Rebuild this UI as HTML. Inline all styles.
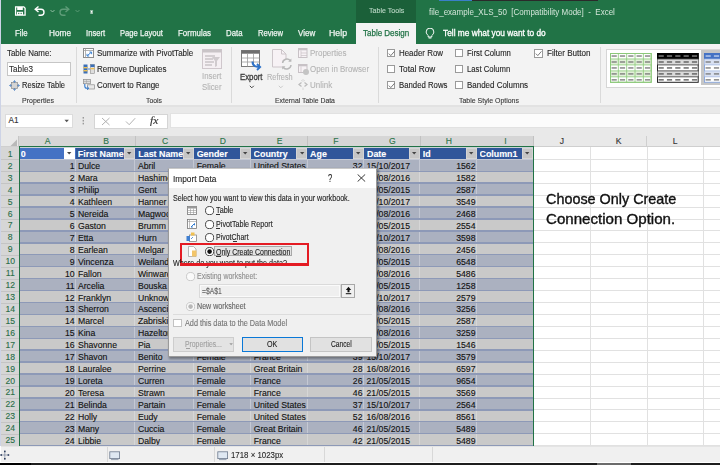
<!DOCTYPE html>
<html><head><meta charset="utf-8"><style>
html,body{margin:0;padding:0;}
body{width:720px;height:465px;overflow:hidden;position:relative;background:#fff;font-family:"Liberation Sans",sans-serif;}
.r{position:absolute;}
.t{position:absolute;white-space:pre;transform-origin:0 0;-webkit-text-stroke:0.12px currentColor;}
</style></head><body>
<div class="r" style="left:0.00px;top:0.00px;width:720.00px;height:44.30px;background:#217346;"></div><div class="r" style="left:0.00px;top:0.00px;width:1.00px;height:446.00px;background:#cdd3e6;"></div><div class="r" style="left:439.00px;top:0.00px;width:33.00px;height:1.20px;background:#3a7fc8;"></div><div class="r" style="left:472.00px;top:0.00px;width:126.00px;height:1.20px;background:#2a2a2a;"></div><div class="r" style="left:356.00px;top:0.00px;width:60.00px;height:23.30px;background:#1b6039;"></div><span class="t" style="left:368.70px;top:7.11px;font-size:7.2px;line-height:7.2px;color:#b9d6c4;transform:scaleX(0.9835);">Table Tools</span><span class="t" style="left:429.00px;top:8.32px;font-size:8.6px;line-height:8.6px;color:#d4e6da;transform:scaleX(0.9309);-webkit-text-stroke:0;">file_example_XLS_50  [Compatibility Mode]  -  Excel</span><svg class="r" style="left:14px;top:6px;" width="12" height="10" viewBox="0 0 12 10"><path d="M1.6 0.9h8.2l1.3 1.3v6.9h-9.5z" fill="none" stroke="#fff" stroke-width="1.3"/><rect x="3.2" y="1" width="5.6" height="3" fill="#fff"/><rect x="3" y="5.8" width="6" height="3.3" fill="#fff"/><rect x="4.2" y="6.8" width="1.1" height="1.3" fill="#217346"/><rect x="6.6" y="6.8" width="1.1" height="1.3" fill="#217346"/></svg><svg class="r" style="left:33px;top:6px;" width="13" height="10" viewBox="0 0 13 10"><path d="M3 3.2h5a3 3 0 0 1 0 6h-2.5" fill="none" stroke="#fff" stroke-width="1.4"/><path d="M5.5 0.5L2.2 3.2L5.5 6" fill="none" stroke="#fff" stroke-width="1.4"/></svg><svg class="r" style="left:49.5px;top:9px;" width="5" height="4" viewBox="0 0 5 4"><path d="M0.5 1l2 2l2-2" fill="none" stroke="#9cc5ad" stroke-width="0.9"/></svg><svg class="r" style="left:59px;top:6px;" width="12" height="10" viewBox="0 0 12 10"><path d="M9 3.2h-5a3 3 0 0 0 0 6h2.5" fill="none" stroke="#5e9c78" stroke-width="1.4"/><path d="M6.5 0.5L9.8 3.2L6.5 6" fill="none" stroke="#5e9c78" stroke-width="1.4"/></svg><svg class="r" style="left:75.2px;top:9px;" width="5" height="4" viewBox="0 0 5 4"><path d="M0.5 1l2 2l2-2" fill="none" stroke="#5e9c78" stroke-width="0.9"/></svg><svg class="r" style="left:88.5px;top:8.5px;" width="6" height="6" viewBox="0 0 6 6"><path d="M0.9 1.6h3.4l-1.7 2.2z" fill="#fff"/><rect x="1.3" y="3.4" width="2.6" height="1.2" fill="#fff"/></svg><span class="t" style="left:14.50px;top:29.00px;font-size:8.5px;line-height:8.5px;color:#eef4f0;transform:scaleX(0.9199);-webkit-text-stroke:0.25px #eef4f0;">File</span><span class="t" style="left:49.00px;top:29.00px;font-size:8.5px;line-height:8.5px;color:#eef4f0;transform:scaleX(0.9703);-webkit-text-stroke:0.25px #eef4f0;">Home</span><span class="t" style="left:85.50px;top:29.00px;font-size:8.5px;line-height:8.5px;color:#eef4f0;transform:scaleX(0.9032);-webkit-text-stroke:0.25px #eef4f0;">Insert</span><span class="t" style="left:120.30px;top:29.00px;font-size:8.5px;line-height:8.5px;color:#eef4f0;transform:scaleX(0.9008);-webkit-text-stroke:0.25px #eef4f0;">Page Layout</span><span class="t" style="left:177.80px;top:29.00px;font-size:8.5px;line-height:8.5px;color:#eef4f0;transform:scaleX(0.9315);-webkit-text-stroke:0.25px #eef4f0;">Formulas</span><span class="t" style="left:225.50px;top:29.00px;font-size:8.5px;line-height:8.5px;color:#eef4f0;transform:scaleX(0.9190);-webkit-text-stroke:0.25px #eef4f0;">Data</span><span class="t" style="left:257.50px;top:29.00px;font-size:8.5px;line-height:8.5px;color:#eef4f0;transform:scaleX(0.8970);-webkit-text-stroke:0.25px #eef4f0;">Review</span><span class="t" style="left:297.50px;top:29.00px;font-size:8.5px;line-height:8.5px;color:#eef4f0;transform:scaleX(0.9414);-webkit-text-stroke:0.25px #eef4f0;">View</span><span class="t" style="left:328.70px;top:29.00px;font-size:8.5px;line-height:8.5px;color:#eef4f0;transform:scaleX(1.0296);-webkit-text-stroke:0.25px #eef4f0;">Help</span><div class="r" style="left:356.00px;top:23.30px;width:60.00px;height:21.00px;background:#f3f3f3;"></div><span class="t" style="left:362.50px;top:29.40px;font-size:8.5px;line-height:8.5px;color:#217346;transform:scaleX(0.9401);-webkit-text-stroke:0.25px #217346;">Table Design</span><svg class="r" style="left:425px;top:28px;" width="11" height="11" viewBox="0 0 11 11"><path d="M3.2 7.5c-1.2-1-2-2.2-2-3.6a3.8 3.8 0 0 1 7.6 0c0 1.4-.8 2.6-2 3.6v1.5h-3.6z" fill="none" stroke="#fff" stroke-width="1"/><path d="M3.6 10h2.8" stroke="#fff" stroke-width="1"/></svg><span class="t" style="left:443.30px;top:29.00px;font-size:8.5px;line-height:8.5px;color:#ffffff;transform:scaleX(0.9791);-webkit-text-stroke:0.3px #fff;">Tell me what you want to do</span><div class="r" style="left:1.00px;top:44.30px;width:719.00px;height:60.70px;background:#f3f3f3;"></div><div class="r" style="left:1.00px;top:104.80px;width:719.00px;height:2.40px;background:#e2e2e2;"></div><div class="r" style="left:1.00px;top:107.00px;width:719.00px;height:28.50px;background:#e9e9e9;"></div><span class="t" style="left:7.00px;top:49.20px;font-size:8.5px;line-height:8.5px;color:#262626;transform:scaleX(0.9326);">Table Name:</span><div class="r" style="left:6.60px;top:61.50px;width:64.00px;height:14.50px;background:#fff;border:1px solid #c6c6c6;box-sizing:border-box;"></div><span class="t" style="left:9.00px;top:64.80px;font-size:8.5px;line-height:8.5px;color:#303030;transform:scaleX(0.9581);">Table3</span><svg class="r" style="left:9px;top:80px;" width="11" height="11" viewBox="0 0 11 11"><rect x="2.5" y="2.5" width="6" height="6" fill="#d4d4d4" stroke="#8a8a8a" stroke-width="0.7"/><path d="M5.5 0.8v2M5.5 8.2v2M0.8 5.5h2M8.2 5.5h2" stroke="#4a7fc0" stroke-width="0.8"/><path d="M4.2 1.8l1.3-1.2l1.3 1.2M4.2 9.2l1.3 1.2l1.3-1.2M1.8 4.2l-1.2 1.3l1.2 1.3M9.2 4.2l1.2 1.3l-1.2 1.3" fill="none" stroke="#4a7fc0" stroke-width="0.8"/></svg><span class="t" style="left:22.00px;top:81.30px;font-size:8.5px;line-height:8.5px;color:#262626;transform:scaleX(0.8864);">Resize Table</span><span class="t" style="left:22.00px;top:96.87px;font-size:7.6px;line-height:7.6px;color:#383838;transform:scaleX(0.9238);">Properties</span><div class="r" style="left:76.00px;top:47.00px;width:1.00px;height:56.00px;background:#dadada;"></div><svg class="r" style="left:83px;top:48px;" width="11" height="10" viewBox="0 0 11 10"><rect x="0.5" y="0.5" width="10" height="9" fill="#fff" stroke="#8c8c8c"/><path d="M0.5 2.5h10M2.5 0.5v9" stroke="#a0a0a0" stroke-width="0.8"/><path d="M4.5 7.5l3.5-3" fill="none" stroke="#2f7ad1" stroke-width="1"/><path d="M4 5.8v2.2h2.2M8.6 6.2v-2.2h-2.2" fill="none" stroke="#2f7ad1" stroke-width="0.9"/></svg><span class="t" style="left:96.50px;top:49.40px;font-size:8.5px;line-height:8.5px;color:#262626;transform:scaleX(0.9437);">Summarize with PivotTable</span><svg class="r" style="left:83px;top:63.5px;" width="12" height="10" viewBox="0 0 12 10"><rect x="0.5" y="0.5" width="4" height="9" fill="#3b6fb6"/><rect x="0.5" y="3" width="4" height="1.4" fill="#f0c050"/><rect x="0.5" y="6" width="4" height="1.4" fill="#f0c050"/><path d="M5 5h2" stroke="#5585c5" stroke-width="1"/><rect x="7.5" y="0.5" width="4" height="9" fill="#dedede" stroke="#8c8c8c" stroke-width="0.6"/><rect x="7.5" y="0.5" width="4" height="2.5" fill="#3b6fb6"/><rect x="7.5" y="4" width="4" height="1.3" fill="#f0c050"/></svg><span class="t" style="left:96.50px;top:65.40px;font-size:8.5px;line-height:8.5px;color:#262626;transform:scaleX(0.9430);">Remove Duplicates</span><svg class="r" style="left:83px;top:79px;" width="12" height="11" viewBox="0 0 12 11"><rect x="0.5" y="0.5" width="7" height="4.2" fill="#dcdcdc" stroke="#8c8c8c" stroke-width="0.7"/><path d="M0.5 2.5h7M3.5 0.5v4" stroke="#9a9a9a" stroke-width="0.5"/><rect x="4.5" y="5.8" width="7" height="4.2" fill="#e8e8e8" stroke="#8c8c8c" stroke-width="0.7"/><path d="M1.8 5v2.2c0 1.3 0.8 2 2.2 2h1.2" fill="none" stroke="#2f7ad1" stroke-width="1.1"/><path d="M4.2 7.6l1.6 1.6l-1.6 1.6" fill="none" stroke="#2f7ad1" stroke-width="1"/></svg><span class="t" style="left:96.50px;top:80.60px;font-size:8.5px;line-height:8.5px;color:#262626;transform:scaleX(0.9381);">Convert to Range</span><svg class="r" style="left:202px;top:49px;" width="20" height="20" viewBox="0 0 20 20"><rect x="0.5" y="0.5" width="19" height="19" fill="#f5f0f3" stroke="#cfc7cc"/><rect x="0.5" y="0.5" width="19" height="3" fill="#c9c4c7"/><path d="M3 7h10M3 10h8M3 13h9M3 16h7" stroke="#c9c4c7" stroke-width="1.3"/><path d="M10 8h8l-3 4v5l-2 1v-6z" fill="#d0cbce"/></svg><span class="t" style="left:202.00px;top:72.10px;font-size:8.5px;line-height:8.5px;color:#b4b4b4;transform:scaleX(0.9173);">Insert</span><span class="t" style="left:202.00px;top:82.80px;font-size:8.5px;line-height:8.5px;color:#b4b4b4;transform:scaleX(0.9174);">Slicer</span><span class="t" style="left:145.70px;top:96.87px;font-size:7.6px;line-height:7.6px;color:#383838;transform:scaleX(0.9018);">Tools</span><div class="r" style="left:231.00px;top:47.00px;width:1.00px;height:56.00px;background:#dadada;"></div><svg class="r" style="left:241px;top:50px;" width="22" height="21" viewBox="0 0 22 21"><rect x="0.5" y="0.5" width="18" height="16" fill="#fff" stroke="#7a7a7a"/><rect x="0.5" y="0.5" width="18" height="3.2" fill="#6e6e6e"/><path d="M0.5 8h18M0.5 12h18M6.5 4v12.5M12.5 4v12.5" stroke="#9a9a9a" stroke-width="0.8"/><path d="M11.5 11.5c0 3.5 2.5 5.5 6.5 5.5" fill="none" stroke="#2f73c9" stroke-width="2"/><path d="M16 14l3.2 3l-3.2 3" fill="none" stroke="#2f73c9" stroke-width="1.8"/></svg><span class="t" style="left:239.50px;top:72.64px;font-size:8.7px;line-height:8.7px;color:#383838;transform:scaleX(0.8948);-webkit-text-stroke:0.3px #383838;">Export</span><svg class="r" style="left:249px;top:85px;" width="6" height="4" viewBox="0 0 6 4"><path d="M0.8 0.8l2 2l2-2" fill="none" stroke="#444" stroke-width="1"/></svg><svg class="r" style="left:272px;top:49px;" width="20" height="21" viewBox="0 0 20 21"><path d="M0.5 0.5h9l4.5 4.5v13h-13.5z" fill="#f7f2f5" stroke="#cdc6ca"/><path d="M9.5 0.5v4.5h4.5" fill="none" stroke="#cdc6ca"/><circle cx="14.8" cy="15" r="5" fill="#f3f3f3"/><path d="M10.6 14a4.3 4.3 0 0 1 7.6-2.4" fill="none" stroke="#b8b8b8" stroke-width="1.5"/><path d="M19 16a4.3 4.3 0 0 1-7.6 2.4" fill="none" stroke="#b8b8b8" stroke-width="1.5"/><path d="M19.4 9.6v3.2h-3.2z" fill="#b8b8b8"/><path d="M10.2 20.4v-3.2h3.2z" fill="#b8b8b8"/></svg><span class="t" style="left:266.70px;top:72.80px;font-size:8.5px;line-height:8.5px;color:#b4b4b4;transform:scaleX(0.8635);">Refresh</span><svg class="r" style="left:277.5px;top:85px;" width="6" height="4" viewBox="0 0 6 4"><path d="M0.8 0.8l2 2l2-2" fill="none" stroke="#c4c4c4" stroke-width="0.9"/></svg><svg class="r" style="left:297.5px;top:48px;" width="10" height="10" viewBox="0 0 10 10"><rect x="0.5" y="0.5" width="8.5" height="9" fill="#f7f2f5" stroke="#c8c2c6"/><rect x="0.5" y="0.5" width="8.5" height="1.8" fill="#c8c2c6"/><path d="M3 2.5v7M3 5h6M3 7.5h6" stroke="#c8c2c6" stroke-width="0.7"/></svg><span class="t" style="left:309.80px;top:49.20px;font-size:8.5px;line-height:8.5px;color:#b4b4b4;transform:scaleX(0.9396);">Properties</span><svg class="r" style="left:297.5px;top:64px;" width="12" height="11" viewBox="0 0 12 11"><rect x="0.5" y="0.5" width="8.5" height="8" fill="#f7f2f5" stroke="#c8c2c6"/><rect x="0.5" y="0.5" width="8.5" height="1.8" fill="#c8c2c6"/><path d="M3 2.5v6" stroke="#c8c2c6" stroke-width="0.7"/><circle cx="8" cy="8" r="3" fill="#c4c4c4"/></svg><span class="t" style="left:309.80px;top:65.00px;font-size:8.5px;line-height:8.5px;color:#b4b4b4;transform:scaleX(0.9335);">Open in Browser</span><svg class="r" style="left:297.5px;top:79px;" width="10" height="11" viewBox="0 0 10 11"><path d="M3.5 3.5l-2.5 2l2.5 2M6.5 3.5l2.5 2l-2.5 2" fill="none" stroke="#bcbcbc" stroke-width="1.3"/><path d="M5 0v2.5M5 8.5v2.5M3.3 1.2l0.8 1.2M6.7 1.2l-0.8 1.2" stroke="#c8c8c8" stroke-width="0.6"/></svg><span class="t" style="left:309.80px;top:80.60px;font-size:8.5px;line-height:8.5px;color:#b4b4b4;transform:scaleX(0.9399);">Unlink</span><span class="t" style="left:274.90px;top:96.87px;font-size:7.6px;line-height:7.6px;color:#383838;transform:scaleX(0.9065);">External Table Data</span><div class="r" style="left:378.00px;top:47.00px;width:1.00px;height:56.00px;background:#dadada;"></div><div class="r" style="left:387.20px;top:49.30px;width:8.20px;height:8.20px;background:#fff;border:1px solid #9a9a9a;box-sizing:border-box;"></div><svg class="r" style="left:387.2px;top:49.3px;" width="9" height="9" viewBox="0 0 9 9"><path d="M1.8 4.6l2 2l3.6-4.2" fill="none" stroke="#555" stroke-width="0.8"/></svg><span class="t" style="left:398.80px;top:49.30px;font-size:8.5px;line-height:8.5px;color:#262626;transform:scaleX(0.9313);">Header Row</span><div class="r" style="left:387.20px;top:65.00px;width:8.20px;height:8.20px;background:#fff;border:1px solid #9a9a9a;box-sizing:border-box;"></div><span class="t" style="left:398.80px;top:65.10px;font-size:8.5px;line-height:8.5px;color:#262626;transform:scaleX(0.9700);">Total Row</span><div class="r" style="left:387.20px;top:80.70px;width:8.20px;height:8.20px;background:#fff;border:1px solid #9a9a9a;box-sizing:border-box;"></div><svg class="r" style="left:387.2px;top:80.7px;" width="9" height="9" viewBox="0 0 9 9"><path d="M1.8 4.6l2 2l3.6-4.2" fill="none" stroke="#555" stroke-width="0.8"/></svg><span class="t" style="left:398.80px;top:80.70px;font-size:8.5px;line-height:8.5px;color:#262626;transform:scaleX(0.9145);">Banded Rows</span><div class="r" style="left:455.00px;top:49.30px;width:8.20px;height:8.20px;background:#fff;border:1px solid #9a9a9a;box-sizing:border-box;"></div><span class="t" style="left:466.60px;top:49.30px;font-size:8.5px;line-height:8.5px;color:#262626;transform:scaleX(0.9113);">First Column</span><div class="r" style="left:455.00px;top:65.00px;width:8.20px;height:8.20px;background:#fff;border:1px solid #9a9a9a;box-sizing:border-box;"></div><span class="t" style="left:466.60px;top:65.10px;font-size:8.5px;line-height:8.5px;color:#262626;transform:scaleX(0.9074);">Last Column</span><div class="r" style="left:455.00px;top:80.70px;width:8.20px;height:8.20px;background:#fff;border:1px solid #9a9a9a;box-sizing:border-box;"></div><span class="t" style="left:466.60px;top:80.70px;font-size:8.5px;line-height:8.5px;color:#262626;transform:scaleX(0.9370);">Banded Columns</span><div class="r" style="left:534.40px;top:49.40px;width:8.20px;height:8.20px;background:#fff;border:1px solid #9a9a9a;box-sizing:border-box;"></div><svg class="r" style="left:534.4px;top:49.4px;" width="9" height="9" viewBox="0 0 9 9"><path d="M1.8 4.6l2 2l3.6-4.2" fill="none" stroke="#555" stroke-width="0.8"/></svg><span class="t" style="left:546.70px;top:49.30px;font-size:8.5px;line-height:8.5px;color:#262626;transform:scaleX(0.9514);">Filter Button</span><span class="t" style="left:459.40px;top:96.87px;font-size:7.6px;line-height:7.6px;color:#383838;transform:scaleX(0.9163);">Table Style Options</span><div class="r" style="left:600.00px;top:47.00px;width:1.00px;height:56.00px;background:#dadada;"></div><div class="r" style="left:606.30px;top:48.80px;width:114.00px;height:39.60px;background:#fff;border:1px solid #d6d6d6;box-sizing:border-box;border-right:none;"></div><svg class="r" style="left:610.3px;top:53px;" width="43" height="31" viewBox="0 0 43 31"><rect x="0.5" y="0.5" width="40.7" height="28.8" fill="#fff" stroke="#8cc97a"/><rect x="0.5" y="5.96" width="40.7" height="5.96" fill="#e2f0d9"/><rect x="0.5" y="17.88" width="40.7" height="5.96" fill="#e2f0d9"/><path d="M0 5.96h41.7" stroke="#8cc97a" stroke-width="0.8"/><path d="M0 11.92h41.7" stroke="#8cc97a" stroke-width="0.8"/><path d="M0 17.88h41.7" stroke="#8cc97a" stroke-width="0.8"/><path d="M0 23.84h41.7" stroke="#8cc97a" stroke-width="0.8"/><path d="M8.34 0v29.8" stroke="#8cc97a" stroke-width="0.8"/><path d="M16.68 0v29.8" stroke="#8cc97a" stroke-width="0.8"/><path d="M25.02 0v29.8" stroke="#8cc97a" stroke-width="0.8"/><path d="M33.36 0v29.8" stroke="#8cc97a" stroke-width="0.8"/><rect x="0.5" y="0.5" width="40.7" height="28.8" fill="none" stroke="#8cc97a"/><rect x="1.57" y="2.38" width="5.2" height="1.3" fill="#777"/><rect x="9.91" y="2.38" width="5.2" height="1.3" fill="#777"/><rect x="18.25" y="2.38" width="5.2" height="1.3" fill="#777"/><rect x="26.59" y="2.38" width="5.2" height="1.3" fill="#777"/><rect x="34.93" y="2.38" width="5.2" height="1.3" fill="#777"/><rect x="1.57" y="8.34" width="5.2" height="1.3" fill="#777"/><rect x="9.91" y="8.34" width="5.2" height="1.3" fill="#777"/><rect x="18.25" y="8.34" width="5.2" height="1.3" fill="#777"/><rect x="26.59" y="8.34" width="5.2" height="1.3" fill="#777"/><rect x="34.93" y="8.34" width="5.2" height="1.3" fill="#777"/><rect x="1.57" y="14.30" width="5.2" height="1.3" fill="#777"/><rect x="9.91" y="14.30" width="5.2" height="1.3" fill="#777"/><rect x="18.25" y="14.30" width="5.2" height="1.3" fill="#777"/><rect x="26.59" y="14.30" width="5.2" height="1.3" fill="#777"/><rect x="34.93" y="14.30" width="5.2" height="1.3" fill="#777"/><rect x="1.57" y="20.26" width="5.2" height="1.3" fill="#777"/><rect x="9.91" y="20.26" width="5.2" height="1.3" fill="#777"/><rect x="18.25" y="20.26" width="5.2" height="1.3" fill="#777"/><rect x="26.59" y="20.26" width="5.2" height="1.3" fill="#777"/><rect x="34.93" y="20.26" width="5.2" height="1.3" fill="#777"/><rect x="1.57" y="26.22" width="5.2" height="1.3" fill="#777"/><rect x="9.91" y="26.22" width="5.2" height="1.3" fill="#777"/><rect x="18.25" y="26.22" width="5.2" height="1.3" fill="#777"/><rect x="26.59" y="26.22" width="5.2" height="1.3" fill="#777"/><rect x="34.93" y="26.22" width="5.2" height="1.3" fill="#777"/></svg><svg class="r" style="left:657px;top:53px;" width="43" height="31" viewBox="0 0 43 31"><rect x="0.5" y="0.5" width="40.7" height="28.8" fill="#fff" stroke="#222"/><rect x="0" y="0" width="41.7" height="5.96" fill="#000"/><rect x="0.5" y="5.96" width="40.7" height="5.96" fill="#dadada"/><rect x="0.5" y="17.88" width="40.7" height="5.96" fill="#dadada"/><path d="M0 5.96h41.7" stroke="#333" stroke-width="0.8"/><path d="M0 11.92h41.7" stroke="#333" stroke-width="0.8"/><path d="M0 17.88h41.7" stroke="#333" stroke-width="0.8"/><path d="M0 23.84h41.7" stroke="#333" stroke-width="0.8"/><rect x="1.57" y="2.38" width="5.2" height="1.3" fill="#8a8a8a"/><rect x="9.91" y="2.38" width="5.2" height="1.3" fill="#8a8a8a"/><rect x="18.25" y="2.38" width="5.2" height="1.3" fill="#8a8a8a"/><rect x="26.59" y="2.38" width="5.2" height="1.3" fill="#8a8a8a"/><rect x="34.93" y="2.38" width="5.2" height="1.3" fill="#8a8a8a"/><rect x="1.57" y="8.34" width="5.2" height="1.3" fill="#555"/><rect x="9.91" y="8.34" width="5.2" height="1.3" fill="#555"/><rect x="18.25" y="8.34" width="5.2" height="1.3" fill="#555"/><rect x="26.59" y="8.34" width="5.2" height="1.3" fill="#555"/><rect x="34.93" y="8.34" width="5.2" height="1.3" fill="#555"/><rect x="1.57" y="14.30" width="5.2" height="1.3" fill="#555"/><rect x="9.91" y="14.30" width="5.2" height="1.3" fill="#555"/><rect x="18.25" y="14.30" width="5.2" height="1.3" fill="#555"/><rect x="26.59" y="14.30" width="5.2" height="1.3" fill="#555"/><rect x="34.93" y="14.30" width="5.2" height="1.3" fill="#555"/><rect x="1.57" y="20.26" width="5.2" height="1.3" fill="#555"/><rect x="9.91" y="20.26" width="5.2" height="1.3" fill="#555"/><rect x="18.25" y="20.26" width="5.2" height="1.3" fill="#555"/><rect x="26.59" y="20.26" width="5.2" height="1.3" fill="#555"/><rect x="34.93" y="20.26" width="5.2" height="1.3" fill="#555"/><rect x="1.57" y="26.22" width="5.2" height="1.3" fill="#555"/><rect x="9.91" y="26.22" width="5.2" height="1.3" fill="#555"/><rect x="18.25" y="26.22" width="5.2" height="1.3" fill="#555"/><rect x="26.59" y="26.22" width="5.2" height="1.3" fill="#555"/><rect x="34.93" y="26.22" width="5.2" height="1.3" fill="#555"/></svg><div class="r" style="left:700.80px;top:50.30px;width:30.00px;height:35.00px;background:#c6c6c6;"></div><svg class="r" style="left:704px;top:53px;" width="43" height="31" viewBox="0 0 43 31"><rect x="0.5" y="0.5" width="40.7" height="28.8" fill="#fff" stroke="#8ea9db"/><rect x="0" y="0" width="41.7" height="5.96" fill="#4472c4"/><rect x="0.5" y="5.96" width="40.7" height="5.96" fill="#d9e1f2"/><rect x="0.5" y="17.88" width="40.7" height="5.96" fill="#d9e1f2"/><path d="M0 5.96h41.7" stroke="#8ea9db" stroke-width="0.6"/><path d="M0 11.92h41.7" stroke="#8ea9db" stroke-width="0.6"/><path d="M0 17.88h41.7" stroke="#8ea9db" stroke-width="0.6"/><path d="M0 23.84h41.7" stroke="#8ea9db" stroke-width="0.6"/><rect x="1.57" y="2.38" width="5.2" height="1.3" fill="#c8d6f0"/><rect x="9.91" y="2.38" width="5.2" height="1.3" fill="#c8d6f0"/><rect x="18.25" y="2.38" width="5.2" height="1.3" fill="#c8d6f0"/><rect x="26.59" y="2.38" width="5.2" height="1.3" fill="#c8d6f0"/><rect x="34.93" y="2.38" width="5.2" height="1.3" fill="#c8d6f0"/><rect x="1.57" y="8.34" width="5.2" height="1.3" fill="#777"/><rect x="9.91" y="8.34" width="5.2" height="1.3" fill="#777"/><rect x="18.25" y="8.34" width="5.2" height="1.3" fill="#777"/><rect x="26.59" y="8.34" width="5.2" height="1.3" fill="#777"/><rect x="34.93" y="8.34" width="5.2" height="1.3" fill="#777"/><rect x="1.57" y="14.30" width="5.2" height="1.3" fill="#777"/><rect x="9.91" y="14.30" width="5.2" height="1.3" fill="#777"/><rect x="18.25" y="14.30" width="5.2" height="1.3" fill="#777"/><rect x="26.59" y="14.30" width="5.2" height="1.3" fill="#777"/><rect x="34.93" y="14.30" width="5.2" height="1.3" fill="#777"/><rect x="1.57" y="20.26" width="5.2" height="1.3" fill="#777"/><rect x="9.91" y="20.26" width="5.2" height="1.3" fill="#777"/><rect x="18.25" y="20.26" width="5.2" height="1.3" fill="#777"/><rect x="26.59" y="20.26" width="5.2" height="1.3" fill="#777"/><rect x="34.93" y="20.26" width="5.2" height="1.3" fill="#777"/><rect x="1.57" y="26.22" width="5.2" height="1.3" fill="#777"/><rect x="9.91" y="26.22" width="5.2" height="1.3" fill="#777"/><rect x="18.25" y="26.22" width="5.2" height="1.3" fill="#777"/><rect x="26.59" y="26.22" width="5.2" height="1.3" fill="#777"/><rect x="34.93" y="26.22" width="5.2" height="1.3" fill="#777"/></svg><div class="r" style="left:4.70px;top:113.50px;width:68.60px;height:14.90px;background:#fff;border:1px solid #dcdcdc;box-sizing:border-box;"></div><span class="t" style="left:8.50px;top:117.46px;font-size:8.2px;line-height:8.2px;color:#333;">A1</span><svg class="r" style="left:64px;top:119px;" width="6" height="4" viewBox="0 0 6 4"><path d="M0.5 0.8h4.4l-2.2 2.4z" fill="#555"/></svg><svg class="r" style="left:81.5px;top:116px;" width="4" height="9" viewBox="0 0 4 9"><rect x="0.6" y="1" width="1.4" height="1.6" fill="#9a9a9a"/><rect x="0.6" y="3.9" width="1.4" height="1.6" fill="#9a9a9a"/><rect x="0.6" y="6.8" width="1.4" height="1.6" fill="#9a9a9a"/></svg><div class="r" style="left:93.50px;top:113.50px;width:74.00px;height:15.00px;background:#fff;border:1px solid #d5d5d5;box-sizing:border-box;"></div><svg class="r" style="left:101px;top:117px;" width="10" height="9" viewBox="0 0 10 9"><path d="M1 1l7.5 7M8.5 1l-7.5 7" stroke="#a8a8a8" stroke-width="0.9"/></svg><svg class="r" style="left:124.5px;top:117px;" width="11" height="9" viewBox="0 0 11 9"><path d="M1 4.5l3.2 3.2l6-6.5" fill="none" stroke="#a8a8a8" stroke-width="0.9"/></svg><span class="t" style="left:149.50px;top:117.46px;font-size:9.5px;line-height:9.5px;color:#333;transform:scaleX(1.2180);font-family:'Liberation Serif',serif;font-style:italic;">fx</span><div class="r" style="left:169.50px;top:113.30px;width:551.00px;height:14.60px;background:#fcfcfc;border:1px solid #e2e2e2;box-sizing:border-box;border-right:none;"></div><div class="r" style="left:1.00px;top:135.50px;width:719.00px;height:11.00px;background:#e9e9e9;"></div><svg class="r" style="left:10px;top:138.5px;" width="8" height="7" viewBox="0 0 8 7"><path d="M7 0.5v6.5h-6.5z" fill="#b9b9b9"/></svg><div class="r" style="left:18.90px;top:135.50px;width:57.50px;height:11.00px;background:#d6d6d6;"></div><div class="r" style="left:75.80px;top:135.50px;width:1.00px;height:11.00px;background:#c2c2c2;"></div><span class="t" style="left:44.78px;top:137.32px;font-size:8.6px;line-height:8.6px;color:#2a7349;">A</span><div class="r" style="left:76.40px;top:135.50px;width:59.20px;height:11.00px;background:#d6d6d6;"></div><div class="r" style="left:135.00px;top:135.50px;width:1.00px;height:11.00px;background:#c2c2c2;"></div><span class="t" style="left:103.13px;top:137.32px;font-size:8.6px;line-height:8.6px;color:#2a7349;">B</span><div class="r" style="left:135.60px;top:135.50px;width:58.80px;height:11.00px;background:#d6d6d6;"></div><div class="r" style="left:193.80px;top:135.50px;width:1.00px;height:11.00px;background:#c2c2c2;"></div><span class="t" style="left:161.89px;top:137.32px;font-size:8.6px;line-height:8.6px;color:#2a7349;">C</span><div class="r" style="left:194.40px;top:135.50px;width:57.00px;height:11.00px;background:#d6d6d6;"></div><div class="r" style="left:250.80px;top:135.50px;width:1.00px;height:11.00px;background:#c2c2c2;"></div><span class="t" style="left:219.79px;top:137.32px;font-size:8.6px;line-height:8.6px;color:#2a7349;">D</span><div class="r" style="left:251.40px;top:135.50px;width:56.40px;height:11.00px;background:#d6d6d6;"></div><div class="r" style="left:307.20px;top:135.50px;width:1.00px;height:11.00px;background:#c2c2c2;"></div><span class="t" style="left:276.73px;top:137.32px;font-size:8.6px;line-height:8.6px;color:#2a7349;">E</span><div class="r" style="left:307.80px;top:135.50px;width:56.40px;height:11.00px;background:#d6d6d6;"></div><div class="r" style="left:363.60px;top:135.50px;width:1.00px;height:11.00px;background:#c2c2c2;"></div><span class="t" style="left:333.37px;top:137.32px;font-size:8.6px;line-height:8.6px;color:#2a7349;">F</span><div class="r" style="left:364.20px;top:135.50px;width:56.30px;height:11.00px;background:#d6d6d6;"></div><div class="r" style="left:419.90px;top:135.50px;width:1.00px;height:11.00px;background:#c2c2c2;"></div><span class="t" style="left:389.01px;top:137.32px;font-size:8.6px;line-height:8.6px;color:#2a7349;">G</span><div class="r" style="left:420.50px;top:135.50px;width:56.70px;height:11.00px;background:#d6d6d6;"></div><div class="r" style="left:476.60px;top:135.50px;width:1.00px;height:11.00px;background:#c2c2c2;"></div><span class="t" style="left:445.74px;top:137.32px;font-size:8.6px;line-height:8.6px;color:#2a7349;">H</span><div class="r" style="left:477.20px;top:135.50px;width:56.40px;height:11.00px;background:#d6d6d6;"></div><div class="r" style="left:533.00px;top:135.50px;width:1.00px;height:11.00px;background:#c2c2c2;"></div><span class="t" style="left:504.21px;top:137.32px;font-size:8.6px;line-height:8.6px;color:#2a7349;">I</span><div class="r" style="left:533.60px;top:135.50px;width:56.70px;height:11.00px;background:#e9e9e9;"></div><div class="r" style="left:589.70px;top:135.50px;width:1.00px;height:11.00px;background:#cfcfcf;"></div><span class="t" style="left:559.80px;top:137.32px;font-size:8.6px;line-height:8.6px;color:#333;">J</span><div class="r" style="left:590.30px;top:135.50px;width:56.70px;height:11.00px;background:#e9e9e9;"></div><div class="r" style="left:646.40px;top:135.50px;width:1.00px;height:11.00px;background:#cfcfcf;"></div><span class="t" style="left:615.78px;top:137.32px;font-size:8.6px;line-height:8.6px;color:#333;">K</span><div class="r" style="left:647.00px;top:135.50px;width:56.30px;height:11.00px;background:#e9e9e9;"></div><div class="r" style="left:702.70px;top:135.50px;width:1.00px;height:11.00px;background:#cfcfcf;"></div><span class="t" style="left:672.76px;top:137.32px;font-size:8.6px;line-height:8.6px;color:#333;">L</span><div class="r" style="left:703.30px;top:135.50px;width:56.70px;height:11.00px;background:#e9e9e9;"></div><div class="r" style="left:759.40px;top:135.50px;width:1.00px;height:11.00px;background:#cfcfcf;"></div><span class="t" style="left:728.07px;top:137.32px;font-size:8.6px;line-height:8.6px;color:#333;">M</span><div class="r" style="left:1.00px;top:146.20px;width:719.00px;height:1.20px;background:#cfcfcf;"></div><div class="r" style="left:18.90px;top:145.80px;width:514.70px;height:1.20px;background:#217346;"></div><div class="r" style="left:1.00px;top:147.00px;width:17.90px;height:300.00px;background:#d6d6d6;"></div><div class="r" style="left:1.00px;top:159.40px;width:17.90px;height:1.00px;background:#c4c4c4;"></div><span class="t" style="left:7.81px;top:149.87px;font-size:8.6px;line-height:8.6px;color:#2a6e48;">1</span><div class="r" style="left:1.00px;top:171.33px;width:17.90px;height:1.00px;background:#c4c4c4;"></div><span class="t" style="left:7.81px;top:161.80px;font-size:8.6px;line-height:8.6px;color:#2a6e48;">2</span><div class="r" style="left:1.00px;top:183.26px;width:17.90px;height:1.00px;background:#c4c4c4;"></div><span class="t" style="left:7.81px;top:173.73px;font-size:8.6px;line-height:8.6px;color:#2a6e48;">3</span><div class="r" style="left:1.00px;top:195.19px;width:17.90px;height:1.00px;background:#c4c4c4;"></div><span class="t" style="left:7.81px;top:185.66px;font-size:8.6px;line-height:8.6px;color:#2a6e48;">4</span><div class="r" style="left:1.00px;top:207.12px;width:17.90px;height:1.00px;background:#c4c4c4;"></div><span class="t" style="left:7.81px;top:197.59px;font-size:8.6px;line-height:8.6px;color:#2a6e48;">5</span><div class="r" style="left:1.00px;top:219.05px;width:17.90px;height:1.00px;background:#c4c4c4;"></div><span class="t" style="left:7.81px;top:209.52px;font-size:8.6px;line-height:8.6px;color:#2a6e48;">6</span><div class="r" style="left:1.00px;top:230.98px;width:17.90px;height:1.00px;background:#c4c4c4;"></div><span class="t" style="left:7.81px;top:221.45px;font-size:8.6px;line-height:8.6px;color:#2a6e48;">7</span><div class="r" style="left:1.00px;top:242.91px;width:17.90px;height:1.00px;background:#c4c4c4;"></div><span class="t" style="left:7.81px;top:233.38px;font-size:8.6px;line-height:8.6px;color:#2a6e48;">8</span><div class="r" style="left:1.00px;top:254.84px;width:17.90px;height:1.00px;background:#c4c4c4;"></div><span class="t" style="left:7.81px;top:245.31px;font-size:8.6px;line-height:8.6px;color:#2a6e48;">9</span><div class="r" style="left:1.00px;top:266.77px;width:17.90px;height:1.00px;background:#c4c4c4;"></div><span class="t" style="left:5.42px;top:257.24px;font-size:8.6px;line-height:8.6px;color:#2a6e48;">10</span><div class="r" style="left:1.00px;top:278.70px;width:17.90px;height:1.00px;background:#c4c4c4;"></div><span class="t" style="left:5.74px;top:269.17px;font-size:8.6px;line-height:8.6px;color:#2a6e48;">11</span><div class="r" style="left:1.00px;top:290.63px;width:17.90px;height:1.00px;background:#c4c4c4;"></div><span class="t" style="left:5.42px;top:281.10px;font-size:8.6px;line-height:8.6px;color:#2a6e48;">12</span><div class="r" style="left:1.00px;top:302.56px;width:17.90px;height:1.00px;background:#c4c4c4;"></div><span class="t" style="left:5.42px;top:293.03px;font-size:8.6px;line-height:8.6px;color:#2a6e48;">13</span><div class="r" style="left:1.00px;top:314.49px;width:17.90px;height:1.00px;background:#c4c4c4;"></div><span class="t" style="left:5.42px;top:304.96px;font-size:8.6px;line-height:8.6px;color:#2a6e48;">14</span><div class="r" style="left:1.00px;top:326.42px;width:17.90px;height:1.00px;background:#c4c4c4;"></div><span class="t" style="left:5.42px;top:316.89px;font-size:8.6px;line-height:8.6px;color:#2a6e48;">15</span><div class="r" style="left:1.00px;top:338.35px;width:17.90px;height:1.00px;background:#c4c4c4;"></div><span class="t" style="left:5.42px;top:328.82px;font-size:8.6px;line-height:8.6px;color:#2a6e48;">16</span><div class="r" style="left:1.00px;top:350.28px;width:17.90px;height:1.00px;background:#c4c4c4;"></div><span class="t" style="left:5.42px;top:340.75px;font-size:8.6px;line-height:8.6px;color:#2a6e48;">17</span><div class="r" style="left:1.00px;top:362.21px;width:17.90px;height:1.00px;background:#c4c4c4;"></div><span class="t" style="left:5.42px;top:352.68px;font-size:8.6px;line-height:8.6px;color:#2a6e48;">18</span><div class="r" style="left:1.00px;top:374.14px;width:17.90px;height:1.00px;background:#c4c4c4;"></div><span class="t" style="left:5.42px;top:364.61px;font-size:8.6px;line-height:8.6px;color:#2a6e48;">19</span><div class="r" style="left:1.00px;top:386.07px;width:17.90px;height:1.00px;background:#c4c4c4;"></div><span class="t" style="left:5.42px;top:376.54px;font-size:8.6px;line-height:8.6px;color:#2a6e48;">20</span><div class="r" style="left:1.00px;top:398.00px;width:17.90px;height:1.00px;background:#c4c4c4;"></div><span class="t" style="left:5.42px;top:388.47px;font-size:8.6px;line-height:8.6px;color:#2a6e48;">21</span><div class="r" style="left:1.00px;top:409.93px;width:17.90px;height:1.00px;background:#c4c4c4;"></div><span class="t" style="left:5.42px;top:400.40px;font-size:8.6px;line-height:8.6px;color:#2a6e48;">22</span><div class="r" style="left:1.00px;top:421.86px;width:17.90px;height:1.00px;background:#c4c4c4;"></div><span class="t" style="left:5.42px;top:412.33px;font-size:8.6px;line-height:8.6px;color:#2a6e48;">23</span><div class="r" style="left:1.00px;top:433.79px;width:17.90px;height:1.00px;background:#c4c4c4;"></div><span class="t" style="left:5.42px;top:424.26px;font-size:8.6px;line-height:8.6px;color:#2a6e48;">24</span><div class="r" style="left:1.00px;top:445.72px;width:17.90px;height:1.00px;background:#c4c4c4;"></div><span class="t" style="left:5.42px;top:436.19px;font-size:8.6px;line-height:8.6px;color:#2a6e48;">25</span><div class="r" style="left:18.20px;top:135.50px;width:0.80px;height:11.00px;background:#c6c6c6;"></div><div class="r" style="left:533.60px;top:147.00px;width:187.00px;height:298.50px;background:#ffffff;"></div><div class="r" style="left:533.60px;top:158.90px;width:187.00px;height:1.00px;background:#e1e1e1;"></div><div class="r" style="left:533.60px;top:170.83px;width:187.00px;height:1.00px;background:#e1e1e1;"></div><div class="r" style="left:533.60px;top:182.76px;width:187.00px;height:1.00px;background:#e1e1e1;"></div><div class="r" style="left:533.60px;top:194.69px;width:187.00px;height:1.00px;background:#e1e1e1;"></div><div class="r" style="left:533.60px;top:206.62px;width:187.00px;height:1.00px;background:#e1e1e1;"></div><div class="r" style="left:533.60px;top:218.55px;width:187.00px;height:1.00px;background:#e1e1e1;"></div><div class="r" style="left:533.60px;top:230.48px;width:187.00px;height:1.00px;background:#e1e1e1;"></div><div class="r" style="left:533.60px;top:242.41px;width:187.00px;height:1.00px;background:#e1e1e1;"></div><div class="r" style="left:533.60px;top:254.34px;width:187.00px;height:1.00px;background:#e1e1e1;"></div><div class="r" style="left:533.60px;top:266.27px;width:187.00px;height:1.00px;background:#e1e1e1;"></div><div class="r" style="left:533.60px;top:278.20px;width:187.00px;height:1.00px;background:#e1e1e1;"></div><div class="r" style="left:533.60px;top:290.13px;width:187.00px;height:1.00px;background:#e1e1e1;"></div><div class="r" style="left:533.60px;top:302.06px;width:187.00px;height:1.00px;background:#e1e1e1;"></div><div class="r" style="left:533.60px;top:313.99px;width:187.00px;height:1.00px;background:#e1e1e1;"></div><div class="r" style="left:533.60px;top:325.92px;width:187.00px;height:1.00px;background:#e1e1e1;"></div><div class="r" style="left:533.60px;top:337.85px;width:187.00px;height:1.00px;background:#e1e1e1;"></div><div class="r" style="left:533.60px;top:349.78px;width:187.00px;height:1.00px;background:#e1e1e1;"></div><div class="r" style="left:533.60px;top:361.71px;width:187.00px;height:1.00px;background:#e1e1e1;"></div><div class="r" style="left:533.60px;top:373.64px;width:187.00px;height:1.00px;background:#e1e1e1;"></div><div class="r" style="left:533.60px;top:385.57px;width:187.00px;height:1.00px;background:#e1e1e1;"></div><div class="r" style="left:533.60px;top:397.50px;width:187.00px;height:1.00px;background:#e1e1e1;"></div><div class="r" style="left:533.60px;top:409.43px;width:187.00px;height:1.00px;background:#e1e1e1;"></div><div class="r" style="left:533.60px;top:421.36px;width:187.00px;height:1.00px;background:#e1e1e1;"></div><div class="r" style="left:533.60px;top:433.29px;width:187.00px;height:1.00px;background:#e1e1e1;"></div><div class="r" style="left:533.60px;top:445.22px;width:187.00px;height:1.00px;background:#e1e1e1;"></div><div class="r" style="left:589.80px;top:147.00px;width:1.00px;height:298.50px;background:#e1e1e1;"></div><div class="r" style="left:646.50px;top:147.00px;width:1.00px;height:298.50px;background:#e1e1e1;"></div><div class="r" style="left:702.80px;top:147.00px;width:1.00px;height:298.50px;background:#e1e1e1;"></div><div class="r" style="left:19.40px;top:159.20px;width:513.60px;height:1.00px;background:#c3c8d4;"></div><div class="r" style="left:19.40px;top:147.00px;width:513.60px;height:1.00px;background:#c9d3d6;"></div><div class="r" style="left:19.40px;top:147.90px;width:513.60px;height:11.30px;background:#30569a;"></div><div class="r" style="left:19.40px;top:147.90px;width:56.50px;height:11.30px;background:#4472c4;"></div><div class="r" style="left:63.90px;top:147.50px;width:11.10px;height:11.60px;background:#ffffff;"></div><svg class="r" style="left:67.25px;top:152.2px;" width="5" height="3" viewBox="0 0 5 3"><path d="M0 0h4.4l-2.2 2.6z" fill="#444"/></svg><div class="r" style="left:20.80px;top:147px;width:43.40px;height:12px;overflow:hidden;"><span class="t" style="left:0.00px;top:2.67px;font-size:8.9px;line-height:8.9px;color:#fff;font-weight:bold;">0</span></div><div class="r" style="left:124.20px;top:147.50px;width:10.90px;height:11.60px;background:#c6c6c6;box-shadow:inset 0 0 0 0.7px #dadada;"></div><svg class="r" style="left:127.44999999999997px;top:152.2px;" width="5" height="3" viewBox="0 0 5 3"><path d="M0 0h4.4l-2.2 2.6z" fill="#444"/></svg><div class="r" style="left:77.80px;top:147px;width:46.70px;height:12px;overflow:hidden;"><span class="t" style="left:0.00px;top:2.67px;font-size:8.9px;line-height:8.9px;color:#fff;font-weight:bold;">First Name</span></div><div class="r" style="left:183.00px;top:147.50px;width:10.90px;height:11.60px;background:#c6c6c6;box-shadow:inset 0 0 0 0.7px #dadada;"></div><svg class="r" style="left:186.25px;top:152.2px;" width="5" height="3" viewBox="0 0 5 3"><path d="M0 0h4.4l-2.2 2.6z" fill="#444"/></svg><div class="r" style="left:138.30px;top:147px;width:45.00px;height:12px;overflow:hidden;"><span class="t" style="left:0.00px;top:2.67px;font-size:8.9px;line-height:8.9px;color:#fff;font-weight:bold;">Last Name</span></div><div class="r" style="left:240.00px;top:147.50px;width:10.90px;height:11.60px;background:#c6c6c6;box-shadow:inset 0 0 0 0.7px #dadada;"></div><svg class="r" style="left:243.25px;top:152.2px;" width="5" height="3" viewBox="0 0 5 3"><path d="M0 0h4.4l-2.2 2.6z" fill="#444"/></svg><div class="r" style="left:196.70px;top:147px;width:43.60px;height:12px;overflow:hidden;"><span class="t" style="left:0.00px;top:2.67px;font-size:8.9px;line-height:8.9px;color:#fff;font-weight:bold;">Gender</span></div><div class="r" style="left:296.40px;top:147.50px;width:10.90px;height:11.60px;background:#c6c6c6;box-shadow:inset 0 0 0 0.7px #dadada;"></div><svg class="r" style="left:299.65000000000003px;top:152.2px;" width="5" height="3" viewBox="0 0 5 3"><path d="M0 0h4.4l-2.2 2.6z" fill="#444"/></svg><div class="r" style="left:253.60px;top:147px;width:43.10px;height:12px;overflow:hidden;"><span class="t" style="left:0.00px;top:2.67px;font-size:8.9px;line-height:8.9px;color:#fff;font-weight:bold;">Country</span></div><div class="r" style="left:352.80px;top:147.50px;width:10.90px;height:11.60px;background:#c6c6c6;box-shadow:inset 0 0 0 0.7px #dadada;"></div><svg class="r" style="left:356.05px;top:152.2px;" width="5" height="3" viewBox="0 0 5 3"><path d="M0 0h4.4l-2.2 2.6z" fill="#444"/></svg><div class="r" style="left:310.10px;top:147px;width:43.00px;height:12px;overflow:hidden;"><span class="t" style="left:0.00px;top:2.67px;font-size:8.9px;line-height:8.9px;color:#fff;font-weight:bold;">Age</span></div><div class="r" style="left:409.10px;top:147.50px;width:10.90px;height:11.60px;background:#c6c6c6;box-shadow:inset 0 0 0 0.7px #dadada;"></div><svg class="r" style="left:412.35px;top:152.2px;" width="5" height="3" viewBox="0 0 5 3"><path d="M0 0h4.4l-2.2 2.6z" fill="#444"/></svg><div class="r" style="left:367.00px;top:147px;width:42.40px;height:12px;overflow:hidden;"><span class="t" style="left:0.00px;top:2.67px;font-size:8.9px;line-height:8.9px;color:#fff;font-weight:bold;">Date</span></div><div class="r" style="left:465.80px;top:147.50px;width:10.90px;height:11.60px;background:#c6c6c6;box-shadow:inset 0 0 0 0.7px #dadada;"></div><svg class="r" style="left:469.05px;top:152.2px;" width="5" height="3" viewBox="0 0 5 3"><path d="M0 0h4.4l-2.2 2.6z" fill="#444"/></svg><div class="r" style="left:422.80px;top:147px;width:43.30px;height:12px;overflow:hidden;"><span class="t" style="left:0.00px;top:2.67px;font-size:8.9px;line-height:8.9px;color:#fff;font-weight:bold;">Id</span></div><div class="r" style="left:522.20px;top:147.50px;width:10.90px;height:11.60px;background:#c6c6c6;box-shadow:inset 0 0 0 0.7px #dadada;"></div><svg class="r" style="left:525.45px;top:152.2px;" width="5" height="3" viewBox="0 0 5 3"><path d="M0 0h4.4l-2.2 2.6z" fill="#444"/></svg><div class="r" style="left:479.50px;top:147px;width:43.00px;height:12px;overflow:hidden;"><span class="t" style="left:0.00px;top:2.67px;font-size:8.9px;line-height:8.9px;color:#fff;font-weight:bold;">Column1</span></div><div class="r" style="left:19.40px;top:160.00px;width:513.60px;height:11.93px;background:#abb1c0;"></div><div class="r" style="left:19.40px;top:170.53px;width:513.60px;height:1.40px;background:#8d99b7;"></div><div class="r" style="left:75.20px;top:160.00px;width:1.00px;height:10.53px;background:#c4c8d3;"></div><div class="r" style="left:134.40px;top:160.00px;width:1.00px;height:10.53px;background:#c4c8d3;"></div><div class="r" style="left:193.20px;top:160.00px;width:1.00px;height:10.53px;background:#c4c8d3;"></div><div class="r" style="left:250.20px;top:160.00px;width:1.00px;height:10.53px;background:#c4c8d3;"></div><div class="r" style="left:306.60px;top:160.00px;width:1.00px;height:10.53px;background:#c4c8d3;"></div><div class="r" style="left:363.00px;top:160.00px;width:1.00px;height:10.53px;background:#c4c8d3;"></div><div class="r" style="left:419.30px;top:160.00px;width:1.00px;height:10.53px;background:#c4c8d3;"></div><div class="r" style="left:476.00px;top:160.00px;width:1.00px;height:10.53px;background:#c4c8d3;"></div><span class="t" style="left:69.86px;top:162.32px;font-size:8.7px;line-height:8.7px;color:#111;">1</span><span class="t" style="left:77.90px;top:162.32px;font-size:8.7px;line-height:8.7px;color:#111;">Dulce</span><span class="t" style="left:137.90px;top:162.32px;font-size:8.7px;line-height:8.7px;color:#111;">Abril</span><span class="t" style="left:196.70px;top:162.32px;font-size:8.7px;line-height:8.7px;color:#111;">Female</span><span class="t" style="left:253.70px;top:162.32px;font-size:8.7px;line-height:8.7px;color:#111;">United States</span><span class="t" style="left:352.82px;top:162.32px;font-size:8.7px;line-height:8.7px;color:#111;">32</span><span class="t" style="left:366.50px;top:162.32px;font-size:8.7px;line-height:8.7px;color:#111;">15/10/2017</span><span class="t" style="left:456.15px;top:162.32px;font-size:8.7px;line-height:8.7px;color:#111;">1562</span><div class="r" style="left:19.40px;top:171.93px;width:513.60px;height:11.93px;background:#c9c9c9;"></div><div class="r" style="left:19.40px;top:182.46px;width:513.60px;height:1.40px;background:#8d99b7;"></div><div class="r" style="left:75.20px;top:171.93px;width:1.00px;height:10.53px;background:#d6d6d6;"></div><div class="r" style="left:134.40px;top:171.93px;width:1.00px;height:10.53px;background:#d6d6d6;"></div><div class="r" style="left:193.20px;top:171.93px;width:1.00px;height:10.53px;background:#d6d6d6;"></div><div class="r" style="left:250.20px;top:171.93px;width:1.00px;height:10.53px;background:#d6d6d6;"></div><div class="r" style="left:306.60px;top:171.93px;width:1.00px;height:10.53px;background:#d6d6d6;"></div><div class="r" style="left:363.00px;top:171.93px;width:1.00px;height:10.53px;background:#d6d6d6;"></div><div class="r" style="left:419.30px;top:171.93px;width:1.00px;height:10.53px;background:#d6d6d6;"></div><div class="r" style="left:476.00px;top:171.93px;width:1.00px;height:10.53px;background:#d6d6d6;"></div><span class="t" style="left:69.86px;top:174.25px;font-size:8.7px;line-height:8.7px;color:#111;">2</span><span class="t" style="left:77.90px;top:174.25px;font-size:8.7px;line-height:8.7px;color:#111;">Mara</span><span class="t" style="left:137.90px;top:174.25px;font-size:8.7px;line-height:8.7px;color:#111;">Hashimoto</span><span class="t" style="left:196.70px;top:174.25px;font-size:8.7px;line-height:8.7px;color:#111;">Female</span><span class="t" style="left:253.70px;top:174.25px;font-size:8.7px;line-height:8.7px;color:#111;">Great Britain</span><span class="t" style="left:352.82px;top:174.25px;font-size:8.7px;line-height:8.7px;color:#111;">25</span><span class="t" style="left:366.50px;top:174.25px;font-size:8.7px;line-height:8.7px;color:#111;">16/08/2016</span><span class="t" style="left:456.15px;top:174.25px;font-size:8.7px;line-height:8.7px;color:#111;">1582</span><div class="r" style="left:19.40px;top:183.86px;width:513.60px;height:11.93px;background:#abb1c0;"></div><div class="r" style="left:19.40px;top:194.39px;width:513.60px;height:1.40px;background:#8d99b7;"></div><div class="r" style="left:75.20px;top:183.86px;width:1.00px;height:10.53px;background:#c4c8d3;"></div><div class="r" style="left:134.40px;top:183.86px;width:1.00px;height:10.53px;background:#c4c8d3;"></div><div class="r" style="left:193.20px;top:183.86px;width:1.00px;height:10.53px;background:#c4c8d3;"></div><div class="r" style="left:250.20px;top:183.86px;width:1.00px;height:10.53px;background:#c4c8d3;"></div><div class="r" style="left:306.60px;top:183.86px;width:1.00px;height:10.53px;background:#c4c8d3;"></div><div class="r" style="left:363.00px;top:183.86px;width:1.00px;height:10.53px;background:#c4c8d3;"></div><div class="r" style="left:419.30px;top:183.86px;width:1.00px;height:10.53px;background:#c4c8d3;"></div><div class="r" style="left:476.00px;top:183.86px;width:1.00px;height:10.53px;background:#c4c8d3;"></div><span class="t" style="left:69.86px;top:186.18px;font-size:8.7px;line-height:8.7px;color:#111;">3</span><span class="t" style="left:77.90px;top:186.18px;font-size:8.7px;line-height:8.7px;color:#111;">Philip</span><span class="t" style="left:137.90px;top:186.18px;font-size:8.7px;line-height:8.7px;color:#111;">Gent</span><span class="t" style="left:196.70px;top:186.18px;font-size:8.7px;line-height:8.7px;color:#111;">Male</span><span class="t" style="left:253.70px;top:186.18px;font-size:8.7px;line-height:8.7px;color:#111;">France</span><span class="t" style="left:352.82px;top:186.18px;font-size:8.7px;line-height:8.7px;color:#111;">36</span><span class="t" style="left:366.50px;top:186.18px;font-size:8.7px;line-height:8.7px;color:#111;">21/05/2015</span><span class="t" style="left:456.15px;top:186.18px;font-size:8.7px;line-height:8.7px;color:#111;">2587</span><div class="r" style="left:19.40px;top:195.79px;width:513.60px;height:11.93px;background:#c9c9c9;"></div><div class="r" style="left:19.40px;top:206.32px;width:513.60px;height:1.40px;background:#8d99b7;"></div><div class="r" style="left:75.20px;top:195.79px;width:1.00px;height:10.53px;background:#d6d6d6;"></div><div class="r" style="left:134.40px;top:195.79px;width:1.00px;height:10.53px;background:#d6d6d6;"></div><div class="r" style="left:193.20px;top:195.79px;width:1.00px;height:10.53px;background:#d6d6d6;"></div><div class="r" style="left:250.20px;top:195.79px;width:1.00px;height:10.53px;background:#d6d6d6;"></div><div class="r" style="left:306.60px;top:195.79px;width:1.00px;height:10.53px;background:#d6d6d6;"></div><div class="r" style="left:363.00px;top:195.79px;width:1.00px;height:10.53px;background:#d6d6d6;"></div><div class="r" style="left:419.30px;top:195.79px;width:1.00px;height:10.53px;background:#d6d6d6;"></div><div class="r" style="left:476.00px;top:195.79px;width:1.00px;height:10.53px;background:#d6d6d6;"></div><span class="t" style="left:69.86px;top:198.11px;font-size:8.7px;line-height:8.7px;color:#111;">4</span><span class="t" style="left:77.90px;top:198.11px;font-size:8.7px;line-height:8.7px;color:#111;">Kathleen</span><span class="t" style="left:137.90px;top:198.11px;font-size:8.7px;line-height:8.7px;color:#111;">Hanner</span><span class="t" style="left:196.70px;top:198.11px;font-size:8.7px;line-height:8.7px;color:#111;">Female</span><span class="t" style="left:253.70px;top:198.11px;font-size:8.7px;line-height:8.7px;color:#111;">United States</span><span class="t" style="left:352.82px;top:198.11px;font-size:8.7px;line-height:8.7px;color:#111;">25</span><span class="t" style="left:366.50px;top:198.11px;font-size:8.7px;line-height:8.7px;color:#111;">15/10/2017</span><span class="t" style="left:456.15px;top:198.11px;font-size:8.7px;line-height:8.7px;color:#111;">3549</span><div class="r" style="left:19.40px;top:207.72px;width:513.60px;height:11.93px;background:#abb1c0;"></div><div class="r" style="left:19.40px;top:218.25px;width:513.60px;height:1.40px;background:#8d99b7;"></div><div class="r" style="left:75.20px;top:207.72px;width:1.00px;height:10.53px;background:#c4c8d3;"></div><div class="r" style="left:134.40px;top:207.72px;width:1.00px;height:10.53px;background:#c4c8d3;"></div><div class="r" style="left:193.20px;top:207.72px;width:1.00px;height:10.53px;background:#c4c8d3;"></div><div class="r" style="left:250.20px;top:207.72px;width:1.00px;height:10.53px;background:#c4c8d3;"></div><div class="r" style="left:306.60px;top:207.72px;width:1.00px;height:10.53px;background:#c4c8d3;"></div><div class="r" style="left:363.00px;top:207.72px;width:1.00px;height:10.53px;background:#c4c8d3;"></div><div class="r" style="left:419.30px;top:207.72px;width:1.00px;height:10.53px;background:#c4c8d3;"></div><div class="r" style="left:476.00px;top:207.72px;width:1.00px;height:10.53px;background:#c4c8d3;"></div><span class="t" style="left:69.86px;top:210.04px;font-size:8.7px;line-height:8.7px;color:#111;">5</span><span class="t" style="left:77.90px;top:210.04px;font-size:8.7px;line-height:8.7px;color:#111;">Nereida</span><span class="t" style="left:137.90px;top:210.04px;font-size:8.7px;line-height:8.7px;color:#111;">Magwood</span><span class="t" style="left:196.70px;top:210.04px;font-size:8.7px;line-height:8.7px;color:#111;">Female</span><span class="t" style="left:253.70px;top:210.04px;font-size:8.7px;line-height:8.7px;color:#111;">United States</span><span class="t" style="left:352.82px;top:210.04px;font-size:8.7px;line-height:8.7px;color:#111;">58</span><span class="t" style="left:366.50px;top:210.04px;font-size:8.7px;line-height:8.7px;color:#111;">16/08/2016</span><span class="t" style="left:456.15px;top:210.04px;font-size:8.7px;line-height:8.7px;color:#111;">2468</span><div class="r" style="left:19.40px;top:219.65px;width:513.60px;height:11.93px;background:#c9c9c9;"></div><div class="r" style="left:19.40px;top:230.18px;width:513.60px;height:1.40px;background:#8d99b7;"></div><div class="r" style="left:75.20px;top:219.65px;width:1.00px;height:10.53px;background:#d6d6d6;"></div><div class="r" style="left:134.40px;top:219.65px;width:1.00px;height:10.53px;background:#d6d6d6;"></div><div class="r" style="left:193.20px;top:219.65px;width:1.00px;height:10.53px;background:#d6d6d6;"></div><div class="r" style="left:250.20px;top:219.65px;width:1.00px;height:10.53px;background:#d6d6d6;"></div><div class="r" style="left:306.60px;top:219.65px;width:1.00px;height:10.53px;background:#d6d6d6;"></div><div class="r" style="left:363.00px;top:219.65px;width:1.00px;height:10.53px;background:#d6d6d6;"></div><div class="r" style="left:419.30px;top:219.65px;width:1.00px;height:10.53px;background:#d6d6d6;"></div><div class="r" style="left:476.00px;top:219.65px;width:1.00px;height:10.53px;background:#d6d6d6;"></div><span class="t" style="left:69.86px;top:221.97px;font-size:8.7px;line-height:8.7px;color:#111;">6</span><span class="t" style="left:77.90px;top:221.97px;font-size:8.7px;line-height:8.7px;color:#111;">Gaston</span><span class="t" style="left:137.90px;top:221.97px;font-size:8.7px;line-height:8.7px;color:#111;">Brumm</span><span class="t" style="left:196.70px;top:221.97px;font-size:8.7px;line-height:8.7px;color:#111;">Male</span><span class="t" style="left:253.70px;top:221.97px;font-size:8.7px;line-height:8.7px;color:#111;">United States</span><span class="t" style="left:352.82px;top:221.97px;font-size:8.7px;line-height:8.7px;color:#111;">24</span><span class="t" style="left:366.50px;top:221.97px;font-size:8.7px;line-height:8.7px;color:#111;">21/05/2015</span><span class="t" style="left:456.15px;top:221.97px;font-size:8.7px;line-height:8.7px;color:#111;">2554</span><div class="r" style="left:19.40px;top:231.58px;width:513.60px;height:11.93px;background:#abb1c0;"></div><div class="r" style="left:19.40px;top:242.11px;width:513.60px;height:1.40px;background:#8d99b7;"></div><div class="r" style="left:75.20px;top:231.58px;width:1.00px;height:10.53px;background:#c4c8d3;"></div><div class="r" style="left:134.40px;top:231.58px;width:1.00px;height:10.53px;background:#c4c8d3;"></div><div class="r" style="left:193.20px;top:231.58px;width:1.00px;height:10.53px;background:#c4c8d3;"></div><div class="r" style="left:250.20px;top:231.58px;width:1.00px;height:10.53px;background:#c4c8d3;"></div><div class="r" style="left:306.60px;top:231.58px;width:1.00px;height:10.53px;background:#c4c8d3;"></div><div class="r" style="left:363.00px;top:231.58px;width:1.00px;height:10.53px;background:#c4c8d3;"></div><div class="r" style="left:419.30px;top:231.58px;width:1.00px;height:10.53px;background:#c4c8d3;"></div><div class="r" style="left:476.00px;top:231.58px;width:1.00px;height:10.53px;background:#c4c8d3;"></div><span class="t" style="left:69.86px;top:233.90px;font-size:8.7px;line-height:8.7px;color:#111;">7</span><span class="t" style="left:77.90px;top:233.90px;font-size:8.7px;line-height:8.7px;color:#111;">Etta</span><span class="t" style="left:137.90px;top:233.90px;font-size:8.7px;line-height:8.7px;color:#111;">Hurn</span><span class="t" style="left:196.70px;top:233.90px;font-size:8.7px;line-height:8.7px;color:#111;">Female</span><span class="t" style="left:253.70px;top:233.90px;font-size:8.7px;line-height:8.7px;color:#111;">Great Britain</span><span class="t" style="left:352.82px;top:233.90px;font-size:8.7px;line-height:8.7px;color:#111;">56</span><span class="t" style="left:366.50px;top:233.90px;font-size:8.7px;line-height:8.7px;color:#111;">15/10/2017</span><span class="t" style="left:456.15px;top:233.90px;font-size:8.7px;line-height:8.7px;color:#111;">3598</span><div class="r" style="left:19.40px;top:243.51px;width:513.60px;height:11.93px;background:#c9c9c9;"></div><div class="r" style="left:19.40px;top:254.04px;width:513.60px;height:1.40px;background:#8d99b7;"></div><div class="r" style="left:75.20px;top:243.51px;width:1.00px;height:10.53px;background:#d6d6d6;"></div><div class="r" style="left:134.40px;top:243.51px;width:1.00px;height:10.53px;background:#d6d6d6;"></div><div class="r" style="left:193.20px;top:243.51px;width:1.00px;height:10.53px;background:#d6d6d6;"></div><div class="r" style="left:250.20px;top:243.51px;width:1.00px;height:10.53px;background:#d6d6d6;"></div><div class="r" style="left:306.60px;top:243.51px;width:1.00px;height:10.53px;background:#d6d6d6;"></div><div class="r" style="left:363.00px;top:243.51px;width:1.00px;height:10.53px;background:#d6d6d6;"></div><div class="r" style="left:419.30px;top:243.51px;width:1.00px;height:10.53px;background:#d6d6d6;"></div><div class="r" style="left:476.00px;top:243.51px;width:1.00px;height:10.53px;background:#d6d6d6;"></div><span class="t" style="left:69.86px;top:245.83px;font-size:8.7px;line-height:8.7px;color:#111;">8</span><span class="t" style="left:77.90px;top:245.83px;font-size:8.7px;line-height:8.7px;color:#111;">Earlean</span><span class="t" style="left:137.90px;top:245.83px;font-size:8.7px;line-height:8.7px;color:#111;">Melgar</span><span class="t" style="left:196.70px;top:245.83px;font-size:8.7px;line-height:8.7px;color:#111;">Female</span><span class="t" style="left:253.70px;top:245.83px;font-size:8.7px;line-height:8.7px;color:#111;">United States</span><span class="t" style="left:352.82px;top:245.83px;font-size:8.7px;line-height:8.7px;color:#111;">27</span><span class="t" style="left:366.50px;top:245.83px;font-size:8.7px;line-height:8.7px;color:#111;">16/08/2016</span><span class="t" style="left:456.15px;top:245.83px;font-size:8.7px;line-height:8.7px;color:#111;">2456</span><div class="r" style="left:19.40px;top:255.44px;width:513.60px;height:11.93px;background:#abb1c0;"></div><div class="r" style="left:19.40px;top:265.97px;width:513.60px;height:1.40px;background:#8d99b7;"></div><div class="r" style="left:75.20px;top:255.44px;width:1.00px;height:10.53px;background:#c4c8d3;"></div><div class="r" style="left:134.40px;top:255.44px;width:1.00px;height:10.53px;background:#c4c8d3;"></div><div class="r" style="left:193.20px;top:255.44px;width:1.00px;height:10.53px;background:#c4c8d3;"></div><div class="r" style="left:250.20px;top:255.44px;width:1.00px;height:10.53px;background:#c4c8d3;"></div><div class="r" style="left:306.60px;top:255.44px;width:1.00px;height:10.53px;background:#c4c8d3;"></div><div class="r" style="left:363.00px;top:255.44px;width:1.00px;height:10.53px;background:#c4c8d3;"></div><div class="r" style="left:419.30px;top:255.44px;width:1.00px;height:10.53px;background:#c4c8d3;"></div><div class="r" style="left:476.00px;top:255.44px;width:1.00px;height:10.53px;background:#c4c8d3;"></div><span class="t" style="left:69.86px;top:257.76px;font-size:8.7px;line-height:8.7px;color:#111;">9</span><span class="t" style="left:77.90px;top:257.76px;font-size:8.7px;line-height:8.7px;color:#111;">Vincenza</span><span class="t" style="left:137.90px;top:257.76px;font-size:8.7px;line-height:8.7px;color:#111;">Weiland</span><span class="t" style="left:196.70px;top:257.76px;font-size:8.7px;line-height:8.7px;color:#111;">Female</span><span class="t" style="left:253.70px;top:257.76px;font-size:8.7px;line-height:8.7px;color:#111;">United States</span><span class="t" style="left:352.82px;top:257.76px;font-size:8.7px;line-height:8.7px;color:#111;">40</span><span class="t" style="left:366.50px;top:257.76px;font-size:8.7px;line-height:8.7px;color:#111;">21/05/2015</span><span class="t" style="left:456.15px;top:257.76px;font-size:8.7px;line-height:8.7px;color:#111;">6548</span><div class="r" style="left:19.40px;top:267.37px;width:513.60px;height:11.93px;background:#c9c9c9;"></div><div class="r" style="left:19.40px;top:277.90px;width:513.60px;height:1.40px;background:#8d99b7;"></div><div class="r" style="left:75.20px;top:267.37px;width:1.00px;height:10.53px;background:#d6d6d6;"></div><div class="r" style="left:134.40px;top:267.37px;width:1.00px;height:10.53px;background:#d6d6d6;"></div><div class="r" style="left:193.20px;top:267.37px;width:1.00px;height:10.53px;background:#d6d6d6;"></div><div class="r" style="left:250.20px;top:267.37px;width:1.00px;height:10.53px;background:#d6d6d6;"></div><div class="r" style="left:306.60px;top:267.37px;width:1.00px;height:10.53px;background:#d6d6d6;"></div><div class="r" style="left:363.00px;top:267.37px;width:1.00px;height:10.53px;background:#d6d6d6;"></div><div class="r" style="left:419.30px;top:267.37px;width:1.00px;height:10.53px;background:#d6d6d6;"></div><div class="r" style="left:476.00px;top:267.37px;width:1.00px;height:10.53px;background:#d6d6d6;"></div><span class="t" style="left:65.02px;top:269.69px;font-size:8.7px;line-height:8.7px;color:#111;">10</span><span class="t" style="left:77.90px;top:269.69px;font-size:8.7px;line-height:8.7px;color:#111;">Fallon</span><span class="t" style="left:137.90px;top:269.69px;font-size:8.7px;line-height:8.7px;color:#111;">Winward</span><span class="t" style="left:196.70px;top:269.69px;font-size:8.7px;line-height:8.7px;color:#111;">Female</span><span class="t" style="left:253.70px;top:269.69px;font-size:8.7px;line-height:8.7px;color:#111;">Great Britain</span><span class="t" style="left:352.82px;top:269.69px;font-size:8.7px;line-height:8.7px;color:#111;">28</span><span class="t" style="left:366.50px;top:269.69px;font-size:8.7px;line-height:8.7px;color:#111;">16/08/2016</span><span class="t" style="left:456.15px;top:269.69px;font-size:8.7px;line-height:8.7px;color:#111;">5486</span><div class="r" style="left:19.40px;top:279.30px;width:513.60px;height:11.93px;background:#abb1c0;"></div><div class="r" style="left:19.40px;top:289.83px;width:513.60px;height:1.40px;background:#8d99b7;"></div><div class="r" style="left:75.20px;top:279.30px;width:1.00px;height:10.53px;background:#c4c8d3;"></div><div class="r" style="left:134.40px;top:279.30px;width:1.00px;height:10.53px;background:#c4c8d3;"></div><div class="r" style="left:193.20px;top:279.30px;width:1.00px;height:10.53px;background:#c4c8d3;"></div><div class="r" style="left:250.20px;top:279.30px;width:1.00px;height:10.53px;background:#c4c8d3;"></div><div class="r" style="left:306.60px;top:279.30px;width:1.00px;height:10.53px;background:#c4c8d3;"></div><div class="r" style="left:363.00px;top:279.30px;width:1.00px;height:10.53px;background:#c4c8d3;"></div><div class="r" style="left:419.30px;top:279.30px;width:1.00px;height:10.53px;background:#c4c8d3;"></div><div class="r" style="left:476.00px;top:279.30px;width:1.00px;height:10.53px;background:#c4c8d3;"></div><span class="t" style="left:65.67px;top:281.62px;font-size:8.7px;line-height:8.7px;color:#111;">11</span><span class="t" style="left:77.90px;top:281.62px;font-size:8.7px;line-height:8.7px;color:#111;">Arcelia</span><span class="t" style="left:137.90px;top:281.62px;font-size:8.7px;line-height:8.7px;color:#111;">Bouska</span><span class="t" style="left:196.70px;top:281.62px;font-size:8.7px;line-height:8.7px;color:#111;">Female</span><span class="t" style="left:253.70px;top:281.62px;font-size:8.7px;line-height:8.7px;color:#111;">Great Britain</span><span class="t" style="left:352.82px;top:281.62px;font-size:8.7px;line-height:8.7px;color:#111;">39</span><span class="t" style="left:366.50px;top:281.62px;font-size:8.7px;line-height:8.7px;color:#111;">21/05/2015</span><span class="t" style="left:456.15px;top:281.62px;font-size:8.7px;line-height:8.7px;color:#111;">1258</span><div class="r" style="left:19.40px;top:291.23px;width:513.60px;height:11.93px;background:#c9c9c9;"></div><div class="r" style="left:19.40px;top:301.76px;width:513.60px;height:1.40px;background:#8d99b7;"></div><div class="r" style="left:75.20px;top:291.23px;width:1.00px;height:10.53px;background:#d6d6d6;"></div><div class="r" style="left:134.40px;top:291.23px;width:1.00px;height:10.53px;background:#d6d6d6;"></div><div class="r" style="left:193.20px;top:291.23px;width:1.00px;height:10.53px;background:#d6d6d6;"></div><div class="r" style="left:250.20px;top:291.23px;width:1.00px;height:10.53px;background:#d6d6d6;"></div><div class="r" style="left:306.60px;top:291.23px;width:1.00px;height:10.53px;background:#d6d6d6;"></div><div class="r" style="left:363.00px;top:291.23px;width:1.00px;height:10.53px;background:#d6d6d6;"></div><div class="r" style="left:419.30px;top:291.23px;width:1.00px;height:10.53px;background:#d6d6d6;"></div><div class="r" style="left:476.00px;top:291.23px;width:1.00px;height:10.53px;background:#d6d6d6;"></div><span class="t" style="left:65.02px;top:293.55px;font-size:8.7px;line-height:8.7px;color:#111;">12</span><span class="t" style="left:77.90px;top:293.55px;font-size:8.7px;line-height:8.7px;color:#111;">Franklyn</span><span class="t" style="left:137.90px;top:293.55px;font-size:8.7px;line-height:8.7px;color:#111;">Unknow</span><span class="t" style="left:196.70px;top:293.55px;font-size:8.7px;line-height:8.7px;color:#111;">Male</span><span class="t" style="left:253.70px;top:293.55px;font-size:8.7px;line-height:8.7px;color:#111;">United States</span><span class="t" style="left:352.82px;top:293.55px;font-size:8.7px;line-height:8.7px;color:#111;">38</span><span class="t" style="left:366.50px;top:293.55px;font-size:8.7px;line-height:8.7px;color:#111;">15/10/2017</span><span class="t" style="left:456.15px;top:293.55px;font-size:8.7px;line-height:8.7px;color:#111;">2579</span><div class="r" style="left:19.40px;top:303.16px;width:513.60px;height:11.93px;background:#abb1c0;"></div><div class="r" style="left:19.40px;top:313.69px;width:513.60px;height:1.40px;background:#8d99b7;"></div><div class="r" style="left:75.20px;top:303.16px;width:1.00px;height:10.53px;background:#c4c8d3;"></div><div class="r" style="left:134.40px;top:303.16px;width:1.00px;height:10.53px;background:#c4c8d3;"></div><div class="r" style="left:193.20px;top:303.16px;width:1.00px;height:10.53px;background:#c4c8d3;"></div><div class="r" style="left:250.20px;top:303.16px;width:1.00px;height:10.53px;background:#c4c8d3;"></div><div class="r" style="left:306.60px;top:303.16px;width:1.00px;height:10.53px;background:#c4c8d3;"></div><div class="r" style="left:363.00px;top:303.16px;width:1.00px;height:10.53px;background:#c4c8d3;"></div><div class="r" style="left:419.30px;top:303.16px;width:1.00px;height:10.53px;background:#c4c8d3;"></div><div class="r" style="left:476.00px;top:303.16px;width:1.00px;height:10.53px;background:#c4c8d3;"></div><span class="t" style="left:65.02px;top:305.48px;font-size:8.7px;line-height:8.7px;color:#111;">13</span><span class="t" style="left:77.90px;top:305.48px;font-size:8.7px;line-height:8.7px;color:#111;">Sherron</span><span class="t" style="left:137.90px;top:305.48px;font-size:8.7px;line-height:8.7px;color:#111;">Ascencio</span><span class="t" style="left:196.70px;top:305.48px;font-size:8.7px;line-height:8.7px;color:#111;">Female</span><span class="t" style="left:253.70px;top:305.48px;font-size:8.7px;line-height:8.7px;color:#111;">Great Britain</span><span class="t" style="left:352.82px;top:305.48px;font-size:8.7px;line-height:8.7px;color:#111;">32</span><span class="t" style="left:366.50px;top:305.48px;font-size:8.7px;line-height:8.7px;color:#111;">16/08/2016</span><span class="t" style="left:456.15px;top:305.48px;font-size:8.7px;line-height:8.7px;color:#111;">3256</span><div class="r" style="left:19.40px;top:315.09px;width:513.60px;height:11.93px;background:#c9c9c9;"></div><div class="r" style="left:19.40px;top:325.62px;width:513.60px;height:1.40px;background:#8d99b7;"></div><div class="r" style="left:75.20px;top:315.09px;width:1.00px;height:10.53px;background:#d6d6d6;"></div><div class="r" style="left:134.40px;top:315.09px;width:1.00px;height:10.53px;background:#d6d6d6;"></div><div class="r" style="left:193.20px;top:315.09px;width:1.00px;height:10.53px;background:#d6d6d6;"></div><div class="r" style="left:250.20px;top:315.09px;width:1.00px;height:10.53px;background:#d6d6d6;"></div><div class="r" style="left:306.60px;top:315.09px;width:1.00px;height:10.53px;background:#d6d6d6;"></div><div class="r" style="left:363.00px;top:315.09px;width:1.00px;height:10.53px;background:#d6d6d6;"></div><div class="r" style="left:419.30px;top:315.09px;width:1.00px;height:10.53px;background:#d6d6d6;"></div><div class="r" style="left:476.00px;top:315.09px;width:1.00px;height:10.53px;background:#d6d6d6;"></div><span class="t" style="left:65.02px;top:317.41px;font-size:8.7px;line-height:8.7px;color:#111;">14</span><span class="t" style="left:77.90px;top:317.41px;font-size:8.7px;line-height:8.7px;color:#111;">Marcel</span><span class="t" style="left:137.90px;top:317.41px;font-size:8.7px;line-height:8.7px;color:#111;">Zabriskie</span><span class="t" style="left:196.70px;top:317.41px;font-size:8.7px;line-height:8.7px;color:#111;">Female</span><span class="t" style="left:253.70px;top:317.41px;font-size:8.7px;line-height:8.7px;color:#111;">Great Britain</span><span class="t" style="left:352.82px;top:317.41px;font-size:8.7px;line-height:8.7px;color:#111;">26</span><span class="t" style="left:366.50px;top:317.41px;font-size:8.7px;line-height:8.7px;color:#111;">21/05/2015</span><span class="t" style="left:456.15px;top:317.41px;font-size:8.7px;line-height:8.7px;color:#111;">2587</span><div class="r" style="left:19.40px;top:327.02px;width:513.60px;height:11.93px;background:#abb1c0;"></div><div class="r" style="left:19.40px;top:337.55px;width:513.60px;height:1.40px;background:#8d99b7;"></div><div class="r" style="left:75.20px;top:327.02px;width:1.00px;height:10.53px;background:#c4c8d3;"></div><div class="r" style="left:134.40px;top:327.02px;width:1.00px;height:10.53px;background:#c4c8d3;"></div><div class="r" style="left:193.20px;top:327.02px;width:1.00px;height:10.53px;background:#c4c8d3;"></div><div class="r" style="left:250.20px;top:327.02px;width:1.00px;height:10.53px;background:#c4c8d3;"></div><div class="r" style="left:306.60px;top:327.02px;width:1.00px;height:10.53px;background:#c4c8d3;"></div><div class="r" style="left:363.00px;top:327.02px;width:1.00px;height:10.53px;background:#c4c8d3;"></div><div class="r" style="left:419.30px;top:327.02px;width:1.00px;height:10.53px;background:#c4c8d3;"></div><div class="r" style="left:476.00px;top:327.02px;width:1.00px;height:10.53px;background:#c4c8d3;"></div><span class="t" style="left:65.02px;top:329.34px;font-size:8.7px;line-height:8.7px;color:#111;">15</span><span class="t" style="left:77.90px;top:329.34px;font-size:8.7px;line-height:8.7px;color:#111;">Kina</span><span class="t" style="left:137.90px;top:329.34px;font-size:8.7px;line-height:8.7px;color:#111;">Hazelton</span><span class="t" style="left:196.70px;top:329.34px;font-size:8.7px;line-height:8.7px;color:#111;">Female</span><span class="t" style="left:253.70px;top:329.34px;font-size:8.7px;line-height:8.7px;color:#111;">Great Britain</span><span class="t" style="left:352.82px;top:329.34px;font-size:8.7px;line-height:8.7px;color:#111;">31</span><span class="t" style="left:366.50px;top:329.34px;font-size:8.7px;line-height:8.7px;color:#111;">16/08/2016</span><span class="t" style="left:456.15px;top:329.34px;font-size:8.7px;line-height:8.7px;color:#111;">3259</span><div class="r" style="left:19.40px;top:338.95px;width:513.60px;height:11.93px;background:#c9c9c9;"></div><div class="r" style="left:19.40px;top:349.48px;width:513.60px;height:1.40px;background:#8d99b7;"></div><div class="r" style="left:75.20px;top:338.95px;width:1.00px;height:10.53px;background:#d6d6d6;"></div><div class="r" style="left:134.40px;top:338.95px;width:1.00px;height:10.53px;background:#d6d6d6;"></div><div class="r" style="left:193.20px;top:338.95px;width:1.00px;height:10.53px;background:#d6d6d6;"></div><div class="r" style="left:250.20px;top:338.95px;width:1.00px;height:10.53px;background:#d6d6d6;"></div><div class="r" style="left:306.60px;top:338.95px;width:1.00px;height:10.53px;background:#d6d6d6;"></div><div class="r" style="left:363.00px;top:338.95px;width:1.00px;height:10.53px;background:#d6d6d6;"></div><div class="r" style="left:419.30px;top:338.95px;width:1.00px;height:10.53px;background:#d6d6d6;"></div><div class="r" style="left:476.00px;top:338.95px;width:1.00px;height:10.53px;background:#d6d6d6;"></div><span class="t" style="left:65.02px;top:341.27px;font-size:8.7px;line-height:8.7px;color:#111;">16</span><span class="t" style="left:77.90px;top:341.27px;font-size:8.7px;line-height:8.7px;color:#111;">Shavonne</span><span class="t" style="left:137.90px;top:341.27px;font-size:8.7px;line-height:8.7px;color:#111;">Pia</span><span class="t" style="left:196.70px;top:341.27px;font-size:8.7px;line-height:8.7px;color:#111;">Female</span><span class="t" style="left:253.70px;top:341.27px;font-size:8.7px;line-height:8.7px;color:#111;">France</span><span class="t" style="left:352.82px;top:341.27px;font-size:8.7px;line-height:8.7px;color:#111;">24</span><span class="t" style="left:366.50px;top:341.27px;font-size:8.7px;line-height:8.7px;color:#111;">21/05/2015</span><span class="t" style="left:456.15px;top:341.27px;font-size:8.7px;line-height:8.7px;color:#111;">1546</span><div class="r" style="left:19.40px;top:350.88px;width:513.60px;height:11.93px;background:#abb1c0;"></div><div class="r" style="left:19.40px;top:361.41px;width:513.60px;height:1.40px;background:#8d99b7;"></div><div class="r" style="left:75.20px;top:350.88px;width:1.00px;height:10.53px;background:#c4c8d3;"></div><div class="r" style="left:134.40px;top:350.88px;width:1.00px;height:10.53px;background:#c4c8d3;"></div><div class="r" style="left:193.20px;top:350.88px;width:1.00px;height:10.53px;background:#c4c8d3;"></div><div class="r" style="left:250.20px;top:350.88px;width:1.00px;height:10.53px;background:#c4c8d3;"></div><div class="r" style="left:306.60px;top:350.88px;width:1.00px;height:10.53px;background:#c4c8d3;"></div><div class="r" style="left:363.00px;top:350.88px;width:1.00px;height:10.53px;background:#c4c8d3;"></div><div class="r" style="left:419.30px;top:350.88px;width:1.00px;height:10.53px;background:#c4c8d3;"></div><div class="r" style="left:476.00px;top:350.88px;width:1.00px;height:10.53px;background:#c4c8d3;"></div><span class="t" style="left:65.02px;top:353.20px;font-size:8.7px;line-height:8.7px;color:#111;">17</span><span class="t" style="left:77.90px;top:353.20px;font-size:8.7px;line-height:8.7px;color:#111;">Shavon</span><span class="t" style="left:137.90px;top:353.20px;font-size:8.7px;line-height:8.7px;color:#111;">Benito</span><span class="t" style="left:196.70px;top:353.20px;font-size:8.7px;line-height:8.7px;color:#111;">Female</span><span class="t" style="left:253.70px;top:353.20px;font-size:8.7px;line-height:8.7px;color:#111;">France</span><span class="t" style="left:352.82px;top:353.20px;font-size:8.7px;line-height:8.7px;color:#111;">39</span><span class="t" style="left:366.50px;top:353.20px;font-size:8.7px;line-height:8.7px;color:#111;">15/10/2017</span><span class="t" style="left:456.15px;top:353.20px;font-size:8.7px;line-height:8.7px;color:#111;">3579</span><div class="r" style="left:19.40px;top:362.81px;width:513.60px;height:11.93px;background:#c9c9c9;"></div><div class="r" style="left:19.40px;top:373.34px;width:513.60px;height:1.40px;background:#8d99b7;"></div><div class="r" style="left:75.20px;top:362.81px;width:1.00px;height:10.53px;background:#d6d6d6;"></div><div class="r" style="left:134.40px;top:362.81px;width:1.00px;height:10.53px;background:#d6d6d6;"></div><div class="r" style="left:193.20px;top:362.81px;width:1.00px;height:10.53px;background:#d6d6d6;"></div><div class="r" style="left:250.20px;top:362.81px;width:1.00px;height:10.53px;background:#d6d6d6;"></div><div class="r" style="left:306.60px;top:362.81px;width:1.00px;height:10.53px;background:#d6d6d6;"></div><div class="r" style="left:363.00px;top:362.81px;width:1.00px;height:10.53px;background:#d6d6d6;"></div><div class="r" style="left:419.30px;top:362.81px;width:1.00px;height:10.53px;background:#d6d6d6;"></div><div class="r" style="left:476.00px;top:362.81px;width:1.00px;height:10.53px;background:#d6d6d6;"></div><span class="t" style="left:65.02px;top:365.13px;font-size:8.7px;line-height:8.7px;color:#111;">18</span><span class="t" style="left:77.90px;top:365.13px;font-size:8.7px;line-height:8.7px;color:#111;">Lauralee</span><span class="t" style="left:137.90px;top:365.13px;font-size:8.7px;line-height:8.7px;color:#111;">Perrine</span><span class="t" style="left:196.70px;top:365.13px;font-size:8.7px;line-height:8.7px;color:#111;">Female</span><span class="t" style="left:253.70px;top:365.13px;font-size:8.7px;line-height:8.7px;color:#111;">Great Britain</span><span class="t" style="left:352.82px;top:365.13px;font-size:8.7px;line-height:8.7px;color:#111;">28</span><span class="t" style="left:366.50px;top:365.13px;font-size:8.7px;line-height:8.7px;color:#111;">16/08/2016</span><span class="t" style="left:456.15px;top:365.13px;font-size:8.7px;line-height:8.7px;color:#111;">6597</span><div class="r" style="left:19.40px;top:374.74px;width:513.60px;height:11.93px;background:#abb1c0;"></div><div class="r" style="left:19.40px;top:385.27px;width:513.60px;height:1.40px;background:#8d99b7;"></div><div class="r" style="left:75.20px;top:374.74px;width:1.00px;height:10.53px;background:#c4c8d3;"></div><div class="r" style="left:134.40px;top:374.74px;width:1.00px;height:10.53px;background:#c4c8d3;"></div><div class="r" style="left:193.20px;top:374.74px;width:1.00px;height:10.53px;background:#c4c8d3;"></div><div class="r" style="left:250.20px;top:374.74px;width:1.00px;height:10.53px;background:#c4c8d3;"></div><div class="r" style="left:306.60px;top:374.74px;width:1.00px;height:10.53px;background:#c4c8d3;"></div><div class="r" style="left:363.00px;top:374.74px;width:1.00px;height:10.53px;background:#c4c8d3;"></div><div class="r" style="left:419.30px;top:374.74px;width:1.00px;height:10.53px;background:#c4c8d3;"></div><div class="r" style="left:476.00px;top:374.74px;width:1.00px;height:10.53px;background:#c4c8d3;"></div><span class="t" style="left:65.02px;top:377.06px;font-size:8.7px;line-height:8.7px;color:#111;">19</span><span class="t" style="left:77.90px;top:377.06px;font-size:8.7px;line-height:8.7px;color:#111;">Loreta</span><span class="t" style="left:137.90px;top:377.06px;font-size:8.7px;line-height:8.7px;color:#111;">Curren</span><span class="t" style="left:196.70px;top:377.06px;font-size:8.7px;line-height:8.7px;color:#111;">Female</span><span class="t" style="left:253.70px;top:377.06px;font-size:8.7px;line-height:8.7px;color:#111;">France</span><span class="t" style="left:352.82px;top:377.06px;font-size:8.7px;line-height:8.7px;color:#111;">26</span><span class="t" style="left:366.50px;top:377.06px;font-size:8.7px;line-height:8.7px;color:#111;">21/05/2015</span><span class="t" style="left:456.15px;top:377.06px;font-size:8.7px;line-height:8.7px;color:#111;">9654</span><div class="r" style="left:19.40px;top:386.67px;width:513.60px;height:11.93px;background:#c9c9c9;"></div><div class="r" style="left:19.40px;top:397.20px;width:513.60px;height:1.40px;background:#8d99b7;"></div><div class="r" style="left:75.20px;top:386.67px;width:1.00px;height:10.53px;background:#d6d6d6;"></div><div class="r" style="left:134.40px;top:386.67px;width:1.00px;height:10.53px;background:#d6d6d6;"></div><div class="r" style="left:193.20px;top:386.67px;width:1.00px;height:10.53px;background:#d6d6d6;"></div><div class="r" style="left:250.20px;top:386.67px;width:1.00px;height:10.53px;background:#d6d6d6;"></div><div class="r" style="left:306.60px;top:386.67px;width:1.00px;height:10.53px;background:#d6d6d6;"></div><div class="r" style="left:363.00px;top:386.67px;width:1.00px;height:10.53px;background:#d6d6d6;"></div><div class="r" style="left:419.30px;top:386.67px;width:1.00px;height:10.53px;background:#d6d6d6;"></div><div class="r" style="left:476.00px;top:386.67px;width:1.00px;height:10.53px;background:#d6d6d6;"></div><span class="t" style="left:65.02px;top:388.99px;font-size:8.7px;line-height:8.7px;color:#111;">20</span><span class="t" style="left:77.90px;top:388.99px;font-size:8.7px;line-height:8.7px;color:#111;">Teresa</span><span class="t" style="left:137.90px;top:388.99px;font-size:8.7px;line-height:8.7px;color:#111;">Strawn</span><span class="t" style="left:196.70px;top:388.99px;font-size:8.7px;line-height:8.7px;color:#111;">Female</span><span class="t" style="left:253.70px;top:388.99px;font-size:8.7px;line-height:8.7px;color:#111;">France</span><span class="t" style="left:352.82px;top:388.99px;font-size:8.7px;line-height:8.7px;color:#111;">46</span><span class="t" style="left:366.50px;top:388.99px;font-size:8.7px;line-height:8.7px;color:#111;">21/05/2015</span><span class="t" style="left:456.15px;top:388.99px;font-size:8.7px;line-height:8.7px;color:#111;">3569</span><div class="r" style="left:19.40px;top:398.60px;width:513.60px;height:11.93px;background:#abb1c0;"></div><div class="r" style="left:19.40px;top:409.13px;width:513.60px;height:1.40px;background:#8d99b7;"></div><div class="r" style="left:75.20px;top:398.60px;width:1.00px;height:10.53px;background:#c4c8d3;"></div><div class="r" style="left:134.40px;top:398.60px;width:1.00px;height:10.53px;background:#c4c8d3;"></div><div class="r" style="left:193.20px;top:398.60px;width:1.00px;height:10.53px;background:#c4c8d3;"></div><div class="r" style="left:250.20px;top:398.60px;width:1.00px;height:10.53px;background:#c4c8d3;"></div><div class="r" style="left:306.60px;top:398.60px;width:1.00px;height:10.53px;background:#c4c8d3;"></div><div class="r" style="left:363.00px;top:398.60px;width:1.00px;height:10.53px;background:#c4c8d3;"></div><div class="r" style="left:419.30px;top:398.60px;width:1.00px;height:10.53px;background:#c4c8d3;"></div><div class="r" style="left:476.00px;top:398.60px;width:1.00px;height:10.53px;background:#c4c8d3;"></div><span class="t" style="left:65.02px;top:400.92px;font-size:8.7px;line-height:8.7px;color:#111;">21</span><span class="t" style="left:77.90px;top:400.92px;font-size:8.7px;line-height:8.7px;color:#111;">Belinda</span><span class="t" style="left:137.90px;top:400.92px;font-size:8.7px;line-height:8.7px;color:#111;">Partain</span><span class="t" style="left:196.70px;top:400.92px;font-size:8.7px;line-height:8.7px;color:#111;">Female</span><span class="t" style="left:253.70px;top:400.92px;font-size:8.7px;line-height:8.7px;color:#111;">United States</span><span class="t" style="left:352.82px;top:400.92px;font-size:8.7px;line-height:8.7px;color:#111;">37</span><span class="t" style="left:366.50px;top:400.92px;font-size:8.7px;line-height:8.7px;color:#111;">15/10/2017</span><span class="t" style="left:456.15px;top:400.92px;font-size:8.7px;line-height:8.7px;color:#111;">2564</span><div class="r" style="left:19.40px;top:410.53px;width:513.60px;height:11.93px;background:#c9c9c9;"></div><div class="r" style="left:19.40px;top:421.06px;width:513.60px;height:1.40px;background:#8d99b7;"></div><div class="r" style="left:75.20px;top:410.53px;width:1.00px;height:10.53px;background:#d6d6d6;"></div><div class="r" style="left:134.40px;top:410.53px;width:1.00px;height:10.53px;background:#d6d6d6;"></div><div class="r" style="left:193.20px;top:410.53px;width:1.00px;height:10.53px;background:#d6d6d6;"></div><div class="r" style="left:250.20px;top:410.53px;width:1.00px;height:10.53px;background:#d6d6d6;"></div><div class="r" style="left:306.60px;top:410.53px;width:1.00px;height:10.53px;background:#d6d6d6;"></div><div class="r" style="left:363.00px;top:410.53px;width:1.00px;height:10.53px;background:#d6d6d6;"></div><div class="r" style="left:419.30px;top:410.53px;width:1.00px;height:10.53px;background:#d6d6d6;"></div><div class="r" style="left:476.00px;top:410.53px;width:1.00px;height:10.53px;background:#d6d6d6;"></div><span class="t" style="left:65.02px;top:412.85px;font-size:8.7px;line-height:8.7px;color:#111;">22</span><span class="t" style="left:77.90px;top:412.85px;font-size:8.7px;line-height:8.7px;color:#111;">Holly</span><span class="t" style="left:137.90px;top:412.85px;font-size:8.7px;line-height:8.7px;color:#111;">Eudy</span><span class="t" style="left:196.70px;top:412.85px;font-size:8.7px;line-height:8.7px;color:#111;">Female</span><span class="t" style="left:253.70px;top:412.85px;font-size:8.7px;line-height:8.7px;color:#111;">United States</span><span class="t" style="left:352.82px;top:412.85px;font-size:8.7px;line-height:8.7px;color:#111;">52</span><span class="t" style="left:366.50px;top:412.85px;font-size:8.7px;line-height:8.7px;color:#111;">16/08/2016</span><span class="t" style="left:456.15px;top:412.85px;font-size:8.7px;line-height:8.7px;color:#111;">8561</span><div class="r" style="left:19.40px;top:422.46px;width:513.60px;height:11.93px;background:#abb1c0;"></div><div class="r" style="left:19.40px;top:432.99px;width:513.60px;height:1.40px;background:#8d99b7;"></div><div class="r" style="left:75.20px;top:422.46px;width:1.00px;height:10.53px;background:#c4c8d3;"></div><div class="r" style="left:134.40px;top:422.46px;width:1.00px;height:10.53px;background:#c4c8d3;"></div><div class="r" style="left:193.20px;top:422.46px;width:1.00px;height:10.53px;background:#c4c8d3;"></div><div class="r" style="left:250.20px;top:422.46px;width:1.00px;height:10.53px;background:#c4c8d3;"></div><div class="r" style="left:306.60px;top:422.46px;width:1.00px;height:10.53px;background:#c4c8d3;"></div><div class="r" style="left:363.00px;top:422.46px;width:1.00px;height:10.53px;background:#c4c8d3;"></div><div class="r" style="left:419.30px;top:422.46px;width:1.00px;height:10.53px;background:#c4c8d3;"></div><div class="r" style="left:476.00px;top:422.46px;width:1.00px;height:10.53px;background:#c4c8d3;"></div><span class="t" style="left:65.02px;top:424.78px;font-size:8.7px;line-height:8.7px;color:#111;">23</span><span class="t" style="left:77.90px;top:424.78px;font-size:8.7px;line-height:8.7px;color:#111;">Many</span><span class="t" style="left:137.90px;top:424.78px;font-size:8.7px;line-height:8.7px;color:#111;">Cuccia</span><span class="t" style="left:196.70px;top:424.78px;font-size:8.7px;line-height:8.7px;color:#111;">Female</span><span class="t" style="left:253.70px;top:424.78px;font-size:8.7px;line-height:8.7px;color:#111;">Great Britain</span><span class="t" style="left:352.82px;top:424.78px;font-size:8.7px;line-height:8.7px;color:#111;">46</span><span class="t" style="left:366.50px;top:424.78px;font-size:8.7px;line-height:8.7px;color:#111;">21/05/2015</span><span class="t" style="left:456.15px;top:424.78px;font-size:8.7px;line-height:8.7px;color:#111;">5489</span><div class="r" style="left:19.40px;top:434.39px;width:513.60px;height:11.93px;background:#c9c9c9;"></div><div class="r" style="left:19.40px;top:444.92px;width:513.60px;height:1.40px;background:#8d99b7;"></div><div class="r" style="left:75.20px;top:434.39px;width:1.00px;height:10.53px;background:#d6d6d6;"></div><div class="r" style="left:134.40px;top:434.39px;width:1.00px;height:10.53px;background:#d6d6d6;"></div><div class="r" style="left:193.20px;top:434.39px;width:1.00px;height:10.53px;background:#d6d6d6;"></div><div class="r" style="left:250.20px;top:434.39px;width:1.00px;height:10.53px;background:#d6d6d6;"></div><div class="r" style="left:306.60px;top:434.39px;width:1.00px;height:10.53px;background:#d6d6d6;"></div><div class="r" style="left:363.00px;top:434.39px;width:1.00px;height:10.53px;background:#d6d6d6;"></div><div class="r" style="left:419.30px;top:434.39px;width:1.00px;height:10.53px;background:#d6d6d6;"></div><div class="r" style="left:476.00px;top:434.39px;width:1.00px;height:10.53px;background:#d6d6d6;"></div><span class="t" style="left:65.02px;top:436.71px;font-size:8.7px;line-height:8.7px;color:#111;">24</span><span class="t" style="left:77.90px;top:436.71px;font-size:8.7px;line-height:8.7px;color:#111;">Libbie</span><span class="t" style="left:137.90px;top:436.71px;font-size:8.7px;line-height:8.7px;color:#111;">Dalby</span><span class="t" style="left:196.70px;top:436.71px;font-size:8.7px;line-height:8.7px;color:#111;">Female</span><span class="t" style="left:253.70px;top:436.71px;font-size:8.7px;line-height:8.7px;color:#111;">France</span><span class="t" style="left:352.82px;top:436.71px;font-size:8.7px;line-height:8.7px;color:#111;">42</span><span class="t" style="left:366.50px;top:436.71px;font-size:8.7px;line-height:8.7px;color:#111;">21/05/2015</span><span class="t" style="left:456.15px;top:436.71px;font-size:8.7px;line-height:8.7px;color:#111;">5489</span><div class="r" style="left:19.40px;top:444.92px;width:513.60px;height:1.40px;background:#8d99b7;"></div><div class="r" style="left:18.50px;top:145.80px;width:1.10px;height:300.40px;background:#217346;"></div><div class="r" style="left:532.70px;top:145.80px;width:1.10px;height:300.40px;background:#217346;"></div><span class="t" style="left:545.70px;top:192.38px;font-size:14.2px;line-height:14.2px;color:#111;transform:scaleX(1.0136);-webkit-text-stroke:0.35px #111;">Choose Only Create</span><span class="t" style="left:545.70px;top:211.98px;font-size:14.2px;line-height:14.2px;color:#111;transform:scaleX(1.0636);-webkit-text-stroke:0.35px #111;">Connection Option.</span><div class="r" style="left:168.80px;top:169.00px;width:210.20px;height:190.00px;background:rgba(0,0,0,0.35);filter:blur(0.8px);"></div><div class="r" style="left:167.80px;top:168.00px;width:209.20px;height:189.00px;background:#f0f0f0;border:1px solid #9a9a9a;border-top-color:#c8c8c8;box-sizing:border-box;"></div><div class="r" style="left:168.80px;top:168.50px;width:207.20px;height:19.20px;background:#ffffff;"></div><span class="t" style="left:172.80px;top:173.94px;font-size:9.4px;line-height:9.4px;color:#1e1e1e;transform:scaleX(0.8858);">Import Data</span><span class="t" style="left:327.60px;top:174.13px;font-size:10.0px;line-height:10.0px;color:#1e1e1e;transform:scaleX(0.7552);">?</span><svg class="r" style="left:356.5px;top:174px;" width="9" height="8" viewBox="0 0 9 8"><path d="M0.6 0.4l7.6 7.2M8.2 0.4l-7.6 7.2" stroke="#222" stroke-width="0.9"/></svg><span class="t" style="left:172.80px;top:193.69px;font-size:8.4px;line-height:8.4px;color:#1e1e1e;transform:scaleX(0.8528);">Select how you want to view this data in your workbook.</span><svg class="r" style="left:204.5px;top:206px;" width="9.2" height="9.2" viewBox="0 0 9.2 9.2"><circle cx="4.6" cy="4.6" r="4.1" fill="#fff" stroke="#333" stroke-width="0.9"/></svg><span class="t" style="left:215.60px;top:206.09px;font-size:8.4px;line-height:8.4px;color:#1e1e1e;transform:scaleX(0.8665);text-decoration:none;">Table</span><div class="r" style="left:215.80px;top:214.20px;width:4.20px;height:0.70px;background:#333;"></div><svg class="r" style="left:204.5px;top:219.6px;" width="9.2" height="9.2" viewBox="0 0 9.2 9.2"><circle cx="4.6" cy="4.6" r="4.1" fill="#fff" stroke="#333" stroke-width="0.9"/></svg><span class="t" style="left:215.60px;top:219.59px;font-size:8.4px;line-height:8.4px;color:#1e1e1e;transform:scaleX(0.8567);">PivotTable Report</span><div class="r" style="left:215.80px;top:227.70px;width:4.40px;height:0.70px;background:#333;"></div><svg class="r" style="left:204.5px;top:232.8px;" width="9.2" height="9.2" viewBox="0 0 9.2 9.2"><circle cx="4.6" cy="4.6" r="4.1" fill="#fff" stroke="#333" stroke-width="0.9"/></svg><span class="t" style="left:215.60px;top:232.89px;font-size:8.4px;line-height:8.4px;color:#1e1e1e;transform:scaleX(0.8338);">PivotChart</span><div class="r" style="left:232.50px;top:241.00px;width:4.20px;height:0.70px;background:#333;"></div><div class="r" style="left:214.20px;top:246.00px;width:77.60px;height:10.20px;background:#e4e4e4;border:1px solid #a8a8a8;box-sizing:border-box;"></div><svg class="r" style="left:204.5px;top:246.8px;" width="9.2" height="9.2" viewBox="0 0 9.2 9.2"><circle cx="4.6" cy="4.6" r="4.1" fill="#fff" stroke="#333" stroke-width="0.9"/><circle cx="4.6" cy="4.6" r="2.3" fill="#111"/></svg><span class="t" style="left:216.00px;top:247.69px;font-size:8.4px;line-height:8.4px;color:#1e1e1e;transform:scaleX(0.8310);">Only Create Connection</span><div class="r" style="left:216.20px;top:255.60px;width:4.60px;height:0.70px;background:#333;"></div><svg class="r" style="left:186.5px;top:205.5px;" width="10" height="9" viewBox="0 0 10 9"><rect x="0.5" y="0.5" width="9" height="8" fill="#fff" stroke="#777" stroke-width="0.8"/><rect x="0.5" y="0.5" width="9" height="2" fill="#9a9a9a"/><path d="M0.5 4.5h9M0.5 6.5h9M3.5 2.5v6M6.5 2.5v6" stroke="#999" stroke-width="0.6"/></svg><svg class="r" style="left:186.5px;top:218.5px;" width="10" height="10" viewBox="0 0 10 10"><rect x="0.5" y="0.5" width="9" height="9" fill="#fff" stroke="#777" stroke-width="0.8"/><path d="M0.5 2.5h9M2.5 0.5v9" stroke="#999" stroke-width="0.6"/><path d="M4 8l3.5-3.5M4 8h1.8M7.5 4.5v1.8" fill="none" stroke="#2f7ad1" stroke-width="1"/></svg><svg class="r" style="left:186px;top:232px;" width="11" height="10" viewBox="0 0 11 10"><rect x="3.5" y="3" width="7" height="6.5" fill="#fff" stroke="#777" stroke-width="0.7"/><rect x="0.5" y="4" width="3.5" height="5" fill="#3f7fd0"/><rect x="5" y="0.5" width="3.5" height="3" fill="#f0c050"/><path d="M5 7l2-2" stroke="#2f7ad1" stroke-width="0.8"/></svg><svg class="r" style="left:187.5px;top:245.5px;" width="9" height="11" viewBox="0 0 9 11"><path d="M0.5 0.5h5l2.5 2.5v7.5h-7.5z" fill="#fff" stroke="#999" stroke-width="0.7"/><rect x="4" y="4.5" width="4.5" height="6" fill="#f2c56a"/></svg><div class="r" style="left:180.10px;top:242.70px;width:128.70px;height:23.50px;background:transparent;border:2.7px solid #e41b23;box-sizing:border-box;"></div><span class="t" style="left:172.80px;top:259.19px;font-size:8.4px;line-height:8.4px;color:#1e1e1e;transform:scaleX(0.8596);">Where do you want to put the data?</span><div class="r" style="left:180.10px;top:263.30px;width:128.70px;height:2.90px;background:#e41b23;"></div><svg class="r" style="left:186.2px;top:271.8px;" width="9.2" height="9.2" viewBox="0 0 9.2 9.2"><circle cx="4.6" cy="4.6" r="4.1" fill="#fafafa" stroke="#c4c4c4" stroke-width="0.9"/></svg><span class="t" style="left:197.00px;top:271.89px;font-size:8.4px;line-height:8.4px;color:#8e8e8e;transform:scaleX(0.8347);">Existing worksheet:</span><div class="r" style="left:199.00px;top:283.70px;width:142.20px;height:14.20px;background:#efefef;border:1px solid #dadada;box-shadow:inset 0 0 0 1px #fafafa;box-sizing:border-box;"></div><span class="t" style="left:202.00px;top:286.69px;font-size:8.4px;line-height:8.4px;color:#626262;transform:scaleX(0.8074);">=$A$1</span><div class="r" style="left:341.20px;top:283.80px;width:13.60px;height:14.00px;background:#f0f0f0;border:1px solid #a8a8a8;box-sizing:border-box;"></div><svg class="r" style="left:344.5px;top:286px;" width="7" height="9" viewBox="0 0 7 9"><path d="M3.5 0.8l-2.7 3.2h1.7v2.2h2v-2.2h1.7z" fill="#111"/><rect x="0.8" y="7.2" width="5.4" height="1" fill="#111"/></svg><svg class="r" style="left:186.2px;top:301.6px;" width="9.2" height="9.2" viewBox="0 0 9.2 9.2"><circle cx="4.6" cy="4.6" r="4.1" fill="#fafafa" stroke="#c4c4c4" stroke-width="0.9"/><circle cx="4.6" cy="4.6" r="2.3" fill="#b8b8b8"/></svg><span class="t" style="left:197.00px;top:302.39px;font-size:8.4px;line-height:8.4px;color:#646464;transform:scaleX(0.8481);">New worksheet</span><div class="r" style="left:172.80px;top:313.50px;width:199.50px;height:0.90px;background:#dcdcdc;"></div><div class="r" style="left:173.20px;top:318.80px;width:8.40px;height:8.00px;background:#fff;border:1px solid #c2c2c2;box-sizing:border-box;"></div><span class="t" style="left:184.80px;top:318.79px;font-size:8.4px;line-height:8.4px;color:#747474;transform:scaleX(0.8702);">Add this data to the Data Model</span><div class="r" style="left:173.30px;top:337.20px;width:60.60px;height:14.50px;background:#e3e3e3;border:1px solid #cdcdcd;box-sizing:border-box;"></div><span class="t" style="left:185.30px;top:339.79px;font-size:8.4px;line-height:8.4px;color:#a0a0a0;transform:scaleX(0.8148);">Properties...</span><div class="r" style="left:186.00px;top:347.60px;width:3.50px;height:0.60px;background:#a0a0a0;"></div><svg class="r" style="left:228.5px;top:342.5px;" width="5" height="3" viewBox="0 0 5 3"><path d="M0.3 0.3h3.6l-1.8 2z" fill="#9a9a9a"/></svg><div class="r" style="left:242.00px;top:336.80px;width:60.80px;height:15.00px;background:#e1e1e1;border:1.4px solid #0a78d7;box-sizing:border-box;"></div><span class="t" style="left:267.20px;top:339.99px;font-size:8.4px;line-height:8.4px;color:#1e1e1e;transform:scaleX(0.8487);">OK</span><div class="r" style="left:310.40px;top:336.80px;width:61.20px;height:15.00px;background:#e1e1e1;border:1px solid #c4c4c4;box-sizing:border-box;"></div><span class="t" style="left:330.50px;top:339.99px;font-size:8.4px;line-height:8.4px;color:#1e1e1e;transform:scaleX(0.7955);">Cancel</span><div class="r" style="left:1.00px;top:446.40px;width:719.00px;height:16.20px;background:#f0f0f0;"></div><div class="r" style="left:1.00px;top:446.40px;width:719.00px;height:0.80px;background:#e4e4e4;"></div><div class="r" style="left:106.70px;top:447.00px;width:1.00px;height:15.00px;background:#d8d8d8;"></div><div class="r" style="left:214.20px;top:447.00px;width:1.00px;height:15.00px;background:#d8d8d8;"></div><div class="r" style="left:323.90px;top:447.00px;width:1.00px;height:15.00px;background:#d8d8d8;"></div><div class="r" style="left:432.20px;top:447.00px;width:1.00px;height:15.00px;background:#d8d8d8;"></div><svg class="r" style="left:0px;top:449.5px;" width="10" height="10" viewBox="0 0 10 10"><path d="M4.8 1v8M0.8 5h8" stroke="#6a7790" stroke-width="0.6"/><rect x="4" y="0.6" width="1.6" height="1.6" fill="#2f3f5e"/><rect x="4" y="8" width="1.6" height="1.6" fill="#2f3f5e"/><rect x="0.4" y="4.2" width="1.6" height="1.6" fill="#2f3f5e"/><rect x="7.6" y="4.2" width="1.6" height="1.6" fill="#2f3f5e"/></svg><svg class="r" style="left:109.3px;top:450.5px;" width="12" height="10" viewBox="0 0 12 10"><rect x="0.8" y="0.8" width="9.8" height="6.8" fill="#dfe8f2" stroke="#6d7a8e" stroke-width="0.8"/><path d="M2 8.6h7.5" stroke="#8a96a8" stroke-width="0.9"/></svg><svg class="r" style="left:217.3px;top:450.5px;" width="12" height="10" viewBox="0 0 12 10"><rect x="0.8" y="0.8" width="9.8" height="6.8" fill="#dfe8f2" stroke="#6d7a8e" stroke-width="0.8"/><path d="M2 8.6h7.5" stroke="#8a96a8" stroke-width="0.9"/></svg><span class="t" style="left:231.00px;top:451.56px;font-size:8.2px;line-height:8.2px;color:#2a2a2a;transform:scaleX(0.9598);">1718 × 1023px</span><div class="r" style="left:0.00px;top:462.00px;width:720.00px;height:0.60px;background:#ffffff;"></div><div class="r" style="left:0.00px;top:462.50px;width:720.00px;height:2.50px;background:#1e1e1e;"></div><div class="r" style="left:0.00px;top:462.50px;width:31.00px;height:2.50px;background:#000;"></div><div class="r" style="left:597.00px;top:462.50px;width:33.50px;height:2.50px;background:#6b6b6b;"></div>
</body></html>
